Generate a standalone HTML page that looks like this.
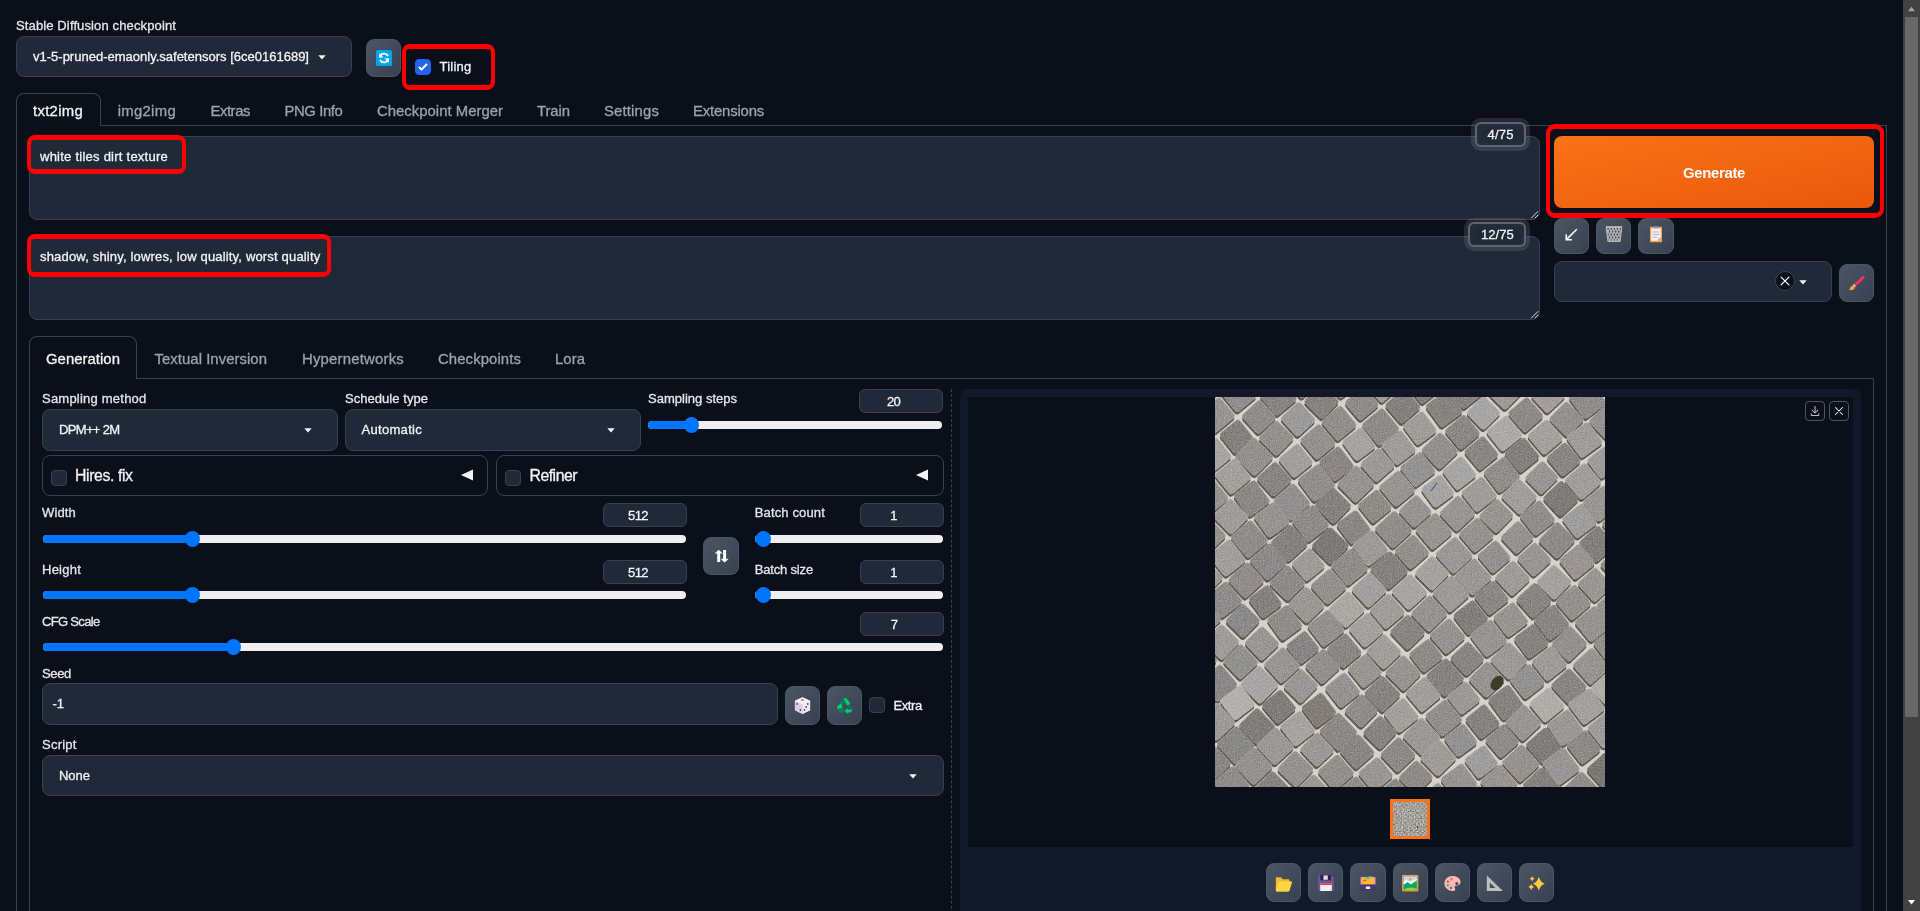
<!DOCTYPE html>
<html lang="en"><head><meta charset="utf-8"><title>Stable Diffusion</title>
<style>
html,body{margin:0;padding:0;}
body{width:1920px;height:911px;overflow:hidden;background:#0b0f19;font-family:"Liberation Sans",sans-serif;position:relative;}
.a{position:absolute;box-sizing:border-box;}
.t{position:absolute;white-space:nowrap;font-family:"Liberation Sans",sans-serif;-webkit-text-stroke:0.3px currentColor;}
svg{position:absolute;overflow:visible;}
#app{position:absolute;left:0;top:0;width:1920px;height:911px;overflow:hidden;will-change:transform;}
.ns{-webkit-text-stroke:0 !important;}

</style></head>
<body>
<div id="app">
<div class="a" style="left:16px;top:36px;width:336px;height:41px;background:#1f2937;border:1px solid #374151;border-radius:8px;"></div>
<svg style="left:317.5px;top:54.5px" width="8" height="5" viewBox="0 0 8 5"><path d="M0.3 0.3h7.4L4 4.6z" fill="#f3f4f6"/></svg>
<div class="a" style="left:366px;top:39px;width:35px;height:38px;background:linear-gradient(to bottom right,#4b5563,#374151);border:1px solid #4b5563;border-radius:8px;"></div>
<svg style="left:375.5px;top:50.2px" width="16" height="16" viewBox="0 0 16 16"><rect width="16" height="16" rx="1.6" fill="#00a6ed"/><path d="M3.6 7.4A4.5 4.5 0 0 1 12 6.0" stroke="#fff" stroke-width="1.7" fill="none"/><path d="M3.2 3.2v4.4h4.4z" fill="#fff"/><path d="M12.4 8.6A4.5 4.5 0 0 1 4 10.0" stroke="#fff" stroke-width="1.7" fill="none"/><path d="M12.8 12.8V8.4H8.4z" fill="#fff"/></svg>
<div class="a" style="left:402px;top:44px;width:93px;height:46px;border:4px solid #ff0000;border-radius:8px;border-width:5px 4px;"></div>
<div class="a" style="left:415px;top:59px;width:16px;height:16px;background:#2563eb;border:1px solid #2563eb;border-radius:4px;"></div>
<svg style="left:415px;top:59px" width="16" height="16" viewBox="0 0 16 16"><path d="M12.207 4.793a1 1 0 010 1.414l-5 5a1 1 0 01-1.414 0l-2-2a1 1 0 011.414-1.414L6.5 9.086l4.293-4.293a1 1 0 011.414 0z" fill="#fff"/></svg>
<div class="a" style="left:16px;top:125px;width:1871px;height:900px;border:1px solid #374151;"></div>
<div class="a" style="left:16px;top:93px;width:85px;height:33px;background:#0b0f19;border:1px solid #374151;border-bottom:none;border-radius:8px 8px 0 0;"></div>
<div class="a" style="left:29px;top:136px;width:1511px;height:84px;background:#1f2937;border:1px solid #374151;border-radius:8px;"></div>
<svg style="left:1530px;top:210px" width="9" height="9" viewBox="0 0 9 9"><path d="M1.2 8.2L8.2 1.2M4.8 8.2L8.2 4.8" stroke="#e5e7eb" stroke-width="0.9" fill="none"/></svg>
<div class="a" style="left:29px;top:236px;width:1511px;height:84px;background:#1f2937;border:1px solid #374151;border-radius:8px;"></div>
<svg style="left:1530px;top:310px" width="9" height="9" viewBox="0 0 9 9"><path d="M1.2 8.2L8.2 1.2M4.8 8.2L8.2 4.8" stroke="#e5e7eb" stroke-width="0.9" fill="none"/></svg>
<div class="a" style="left:27px;top:135px;width:159px;height:39px;border:4px solid #ff0000;border-radius:8px;border-width:5px 4px;"></div>
<div class="a" style="left:27px;top:234px;width:304px;height:43px;border:4px solid #ff0000;border-radius:8px;border-width:5px 4px;"></div>
<div class="a" style="left:1475px;top:122px;width:51px;height:25px;background:#1f2937;border:2px solid rgba(192,192,192,0.4);border-radius:6px;box-shadow:0 0 0 4px rgba(192,192,192,0.15), inset 0 0 8px rgba(192,192,192,0.075);"></div>
<div class="a" style="left:1468px;top:222px;width:58px;height:25px;background:#1f2937;border:2px solid rgba(192,192,192,0.4);border-radius:6px;box-shadow:0 0 0 4px rgba(192,192,192,0.15), inset 0 0 8px rgba(192,192,192,0.075);"></div>
<div class="a" style="left:1546px;top:124px;width:338px;height:94px;border:4px solid #ff0000;border-radius:9px;border-width:5px 4px;"></div>
<div class="a" style="left:1554px;top:136px;width:320px;height:72px;background:linear-gradient(to bottom right,#f97316,#ea580c);border-radius:8px;"></div>
<div class="a" style="left:1554px;top:218px;width:35px;height:36px;background:linear-gradient(to bottom right,#4b5563,#374151);border:1px solid #4b5563;border-radius:8px;"></div>
<div class="a" style="left:1596px;top:218px;width:35px;height:36px;background:linear-gradient(to bottom right,#4b5563,#374151);border:1px solid #4b5563;border-radius:8px;"></div>
<div class="a" style="left:1638px;top:218px;width:36px;height:36px;background:linear-gradient(to bottom right,#4b5563,#374151);border:1px solid #4b5563;border-radius:8px;"></div>
<svg style="left:1554px;top:218px" width="35" height="36" viewBox="0 0 35 36"><path d="M22.8 11.2L12.6 21.4" stroke="#fff" stroke-width="1.5" fill="none"/><path d="M12.2 16.2v5.6h5.600" stroke="#fff" stroke-width="1.5" fill="none" stroke-linejoin="miter"/></svg><svg style="left:1596px;top:218px" width="35" height="36" viewBox="0 0 35 36"><defs><clipPath id="tcp"><path d="M10.300 9.600h15.400l-1.600 13.400H11.900z"/></clipPath></defs><g clip-path="url(#tcp)" stroke="#b9b9b9" stroke-width="1.150" fill="none"><path d="M-0.2 8l9 17M-0.2 25l9-17"/><path d="M2.9 8l9 17M2.9 25l9-17"/><path d="M6.0 8l9 17M6.0 25l9-17"/><path d="M9.1 8l9 17M9.1 25l9-17"/><path d="M12.2 8l9 17M12.2 25l9-17"/><path d="M15.3 8l9 17M15.3 25l9-17"/><path d="M18.4 8l9 17M18.4 25l9-17"/><path d="M21.5 8l9 17M21.5 25l9-17"/><path d="M24.6 8l9 17M24.6 25l9-17"/></g><path d="M9.900 8.200h16.200v1.700H9.900z" fill="#c3c3c3"/><path d="M10.300 9.600l1.600 13.400" stroke="#b9b9b9" stroke-width="1.100"/><path d="M25.700 9.600l-1.600 13.400" stroke="#b9b9b9" stroke-width="1.100"/><path d="M11.500 22.400h13l-.200 1.700H11.700z" fill="#b4b4b4"/></svg><svg style="left:1638px;top:218px" width="36" height="36" viewBox="0 0 36 36"><rect x="12" y="8.8" width="12" height="15.4" rx="0.8" fill="#f4a340"/><path d="M13.2 10.2h9.6v9.6l-3 3h-6.6z" fill="#f3eef8"/><path d="M22.8 19.8l-3 3v-3z" fill="#cdc4d6"/><rect x="15.2" y="8.4" width="5.6" height="2.2" rx="0.6" fill="#9b9b9b"/><rect x="17.3" y="7.8" width="1.4" height="1.2" fill="#7d7d86"/><path d="M14.6 14h6.8M14.6 16.6h6.8M14.6 19.2h4.4" stroke="#b9b6c0" stroke-width="1"/></svg>
<div class="a" style="left:1554px;top:261px;width:278px;height:41px;background:#1f2937;border:1px solid #374151;border-radius:8px;"></div>
<svg style="left:1775px;top:271px" width="20" height="20" viewBox="0 0 20 20"><circle cx="10" cy="10" r="9.500" fill="#0b0f19" stroke="#374151" stroke-width="1"/><path d="M6.100 6.100l7.800 7.800M13.900 6.100l-7.800 7.800" stroke="#fff" stroke-width="1.200" stroke-linecap="round"/></svg>
<svg style="left:1799px;top:279.5px" width="8" height="5" viewBox="0 0 8 5"><path d="M0.3 0.3h7.4L4 4.6z" fill="#f3f4f6"/></svg>
<div class="a" style="left:1839px;top:264px;width:35px;height:38px;background:linear-gradient(to bottom right,#4b5563,#374151);border:1px solid #4b5563;border-radius:8px;"></div>
<svg style="left:1839px;top:264px" width="35" height="38" viewBox="0 0 35 38"><path d="M24.3 13.2L15.6 21.4" stroke="#f92f60" stroke-width="2.8" stroke-linecap="round"/><path d="M15.9 21.1L14.7 22.2" stroke="#d3d3d3" stroke-width="3.0"/><path d="M14.3 22.0c1.2 0.6 1.6 2.0 0.7 3.0c-1.2 1.4-3.4 1.2-5.2 0.9c0.9-0.4 1.2-1.0 1.4-1.9c0.3-1.5 1.8-2.6 3.1-2z" fill="#fcab18"/></svg>
<div class="a" style="left:29px;top:378px;width:1845px;height:700px;border:1px solid #374151;"></div>
<div class="a" style="left:29px;top:336px;width:108px;height:43px;background:#0b0f19;border:1px solid #374151;border-bottom:none;border-radius:8px 8px 0 0;"></div>
<div class="a" style="left:42px;top:409px;width:296px;height:42px;background:#1f2937;border:1px solid #374151;border-radius:8px;"></div>
<svg style="left:303.5px;top:428.0px" width="8" height="5" viewBox="0 0 8 5"><path d="M0.3 0.3h7.4L4 4.6z" fill="#f3f4f6"/></svg>
<div class="a" style="left:345px;top:409px;width:296px;height:42px;background:#1f2937;border:1px solid #374151;border-radius:8px;"></div>
<svg style="left:606.5px;top:428.0px" width="8" height="5" viewBox="0 0 8 5"><path d="M0.3 0.3h7.4L4 4.6z" fill="#f3f4f6"/></svg>
<div class="a" style="left:859px;top:389px;width:84px;height:24px;background:#1f2937;border:1px solid #374151;border-radius:6px;"></div>
<div class="a" style="left:648px;top:421px;width:294px;height:8px;background:#efefef;border-radius:4px;"></div>
<div class="a" style="left:648px;top:421px;width:43px;height:8px;background:#0075ff;border-radius:4px;"></div>
<div class="a" style="left:683.5px;top:417px;width:15px;height:16px;background:#0075ff;border-radius:50%;"></div>
<div class="a" style="left:42px;top:455px;width:446px;height:41px;border:1px solid #374151;border-radius:8px;"></div>
<div class="a" style="left:51px;top:470px;width:16px;height:16px;background:#1f2937;border:1px solid #374151;border-radius:4px;"></div>
<svg style="left:461px;top:469px" width="12" height="12" viewBox="0 0 12 12"><path d="M12 0.5v11L0 6z" fill="#f3f4f6"/></svg>
<div class="a" style="left:496px;top:455px;width:448px;height:41px;border:1px solid #374151;border-radius:8px;"></div>
<div class="a" style="left:505px;top:470px;width:16px;height:16px;background:#1f2937;border:1px solid #374151;border-radius:4px;"></div>
<svg style="left:916px;top:469px" width="12" height="12" viewBox="0 0 12 12"><path d="M12 0.5v11L0 6z" fill="#f3f4f6"/></svg>
<div class="a" style="left:603px;top:503px;width:84px;height:24px;background:#1f2937;border:1px solid #374151;border-radius:6px;"></div>
<div class="a" style="left:43px;top:535px;width:643px;height:8px;background:#efefef;border-radius:4px;"></div>
<div class="a" style="left:43px;top:535px;width:149px;height:8px;background:#0075ff;border-radius:4px;"></div>
<div class="a" style="left:184.5px;top:531px;width:15px;height:16px;background:#0075ff;border-radius:50%;"></div>
<div class="a" style="left:603px;top:560px;width:84px;height:24px;background:#1f2937;border:1px solid #374151;border-radius:6px;"></div>
<div class="a" style="left:43px;top:591px;width:643px;height:8px;background:#efefef;border-radius:4px;"></div>
<div class="a" style="left:43px;top:591px;width:149px;height:8px;background:#0075ff;border-radius:4px;"></div>
<div class="a" style="left:184.5px;top:587px;width:15px;height:16px;background:#0075ff;border-radius:50%;"></div>
<div class="a" style="left:703px;top:537px;width:36px;height:38px;background:linear-gradient(to bottom right,#4b5563,#374151);border:1px solid #4b5563;border-radius:8px;"></div>
<svg style="left:703px;top:537px" width="36" height="38" viewBox="0 0 36 38"><path d="M15.7 25V14.2" stroke="#fff" stroke-width="3" fill="none"/><path d="M11.6 16.4l4.1-3.6 4.1 3.6z" fill="#fff"/><path d="M21.6 13v10.6" stroke="#fff" stroke-width="3" fill="none"/><path d="M17.5 21.8l4.1 3.6 4.1-3.6z" fill="#fff"/></svg>
<div class="a" style="left:860px;top:503px;width:84px;height:24px;background:#1f2937;border:1px solid #374151;border-radius:6px;"></div>
<div class="a" style="left:755px;top:535px;width:188px;height:8px;background:#efefef;border-radius:4px;"></div>
<div class="a" style="left:755px;top:535px;width:8px;height:8px;background:#0075ff;border-radius:4px;"></div>
<div class="a" style="left:755.5px;top:531px;width:15px;height:16px;background:#0075ff;border-radius:50%;"></div>
<div class="a" style="left:860px;top:560px;width:84px;height:24px;background:#1f2937;border:1px solid #374151;border-radius:6px;"></div>
<div class="a" style="left:755px;top:591px;width:188px;height:8px;background:#efefef;border-radius:4px;"></div>
<div class="a" style="left:755px;top:591px;width:8px;height:8px;background:#0075ff;border-radius:4px;"></div>
<div class="a" style="left:755.5px;top:587px;width:15px;height:16px;background:#0075ff;border-radius:50%;"></div>
<div class="a" style="left:860px;top:612px;width:84px;height:24px;background:#1f2937;border:1px solid #374151;border-radius:6px;"></div>
<div class="a" style="left:43px;top:643px;width:900px;height:8px;background:#efefef;border-radius:4px;"></div>
<div class="a" style="left:43px;top:643px;width:190px;height:8px;background:#0075ff;border-radius:4px;"></div>
<div class="a" style="left:225.5px;top:639px;width:15px;height:16px;background:#0075ff;border-radius:50%;"></div>
<div class="a" style="left:42px;top:683px;width:736px;height:42px;background:#1f2937;border:1px solid #374151;border-radius:8px;"></div>
<div class="a" style="left:785px;top:686px;width:35px;height:39px;background:linear-gradient(to bottom right,#4b5563,#374151);border:1px solid #4b5563;border-radius:8px;"></div>
<div class="a" style="left:827px;top:686px;width:35px;height:39px;background:linear-gradient(to bottom right,#4b5563,#374151);border:1px solid #4b5563;border-radius:8px;"></div>
<svg style="left:785px;top:686px" width="35" height="39" viewBox="0 0 35 39"><path d="M17.5 11.2l7.6 3.6v9.4l-7.6 3.7-7.6-3.7v-9.4z" fill="#e1d8ec"/><path d="M17.5 11.2l7.6 3.6-7.6 3.8-7.6-3.8z" fill="#f6f1fa"/><path d="M17.5 18.6l7.6-3.8v9.4l-7.6 3.7z" fill="#efe8f5"/><path d="M17.5 18.6l-7.6-3.8v9.4l7.6 3.7z" fill="#d9cfe4"/><ellipse cx="17.5" cy="14" rx="1.6" ry="1" fill="#f8706a"/><ellipse cx="12.1" cy="18" rx="0.8" ry="1" fill="#433b6b"/><ellipse cx="15.4" cy="24" rx="0.8" ry="1" fill="#433b6b"/><ellipse cx="22.8" cy="18" rx="0.8" ry="1" fill="#433b6b"/><ellipse cx="21.2" cy="21" rx="0.8" ry="1" fill="#433b6b"/><ellipse cx="19.5" cy="24" rx="0.8" ry="1" fill="#433b6b"/></svg><svg style="left:827px;top:686px" width="35" height="39" viewBox="0 0 35 39"><path d="M16.3 12.2h3.4l3.6 5.8-3.2 1.6-2.3-4z" fill="#00d26a"/><path d="M16.3 12.2l1.5 3.4-2.2 3.6-2.8-1.7z" fill="#008463"/><path d="M13.4 18.2l1.2 4-3 .2 1.6 4.2-2.6-4.2c-.5-.9-.4-1.6 0-2.4z" fill="#00d26a"/><path d="M10.6 20l3.4-2.6 1.6 4.2-2.2 1.2z" fill="#00d26a"/><path d="M12.4 23h5v3.6h-3.6c-1 0-1.5-.4-2-1.2z" fill="#008463"/><path d="M22.6 18.4l2.6 4.4c.4.8.3 1.500-.2 2.2l-2-3.400-2.800-1.600z" fill="#008463"/><path d="M25.400 23.400l-1.600 3.200h-3.200v1.400l-3-2.900 3-3v1.300z" fill="#00d26a"/></svg>
<div class="a" style="left:869px;top:697px;width:16px;height:16px;background:#1f2937;border:1px solid #374151;border-radius:4px;"></div>
<div class="a" style="left:42px;top:755px;width:902px;height:41px;background:#1f2937;border:1px solid #374151;border-radius:8px;"></div>
<svg style="left:908.5px;top:773.5px" width="8" height="5" viewBox="0 0 8 5"><path d="M0.3 0.3h7.4L4 4.6z" fill="#f3f4f6"/></svg>
<div class="a" style="left:951px;top:389px;width:1px;height:600px;border-left:1px dashed #374151;"></div>
<div class="a" style="left:960px;top:389px;width:901px;height:600px;background:#111827;border-radius:8px;"></div>
<div class="a" style="left:968px;top:397px;width:885px;height:450px;background:#0b0f19;"></div>
<svg style="left:1215px;top:397px" width="390" height="390" viewBox="0 0 390 390"><defs><clipPath id="cpim"><rect width="390" height="390"/></clipPath><filter id="blim" x="-5%" y="-5%" width="110%" height="110%"><feGaussianBlur stdDeviation="0.55"/></filter><filter id="grim" x="0" y="0" width="100%" height="100%" color-interpolation-filters="sRGB"><feTurbulence type="fractalNoise" baseFrequency="0.85" numOctaves="3" seed="3" result="n"/><feColorMatrix in="n" type="matrix" values="1.2 1.2 0 0 -0.7  1.2 1.2 0 0 -0.7  1.2 1.2 0 0 -0.7  0 0 0 0 1"/></filter></defs><g clip-path="url(#cpim)"><rect width="390" height="390" fill="#d6d3ce"/><g filter="url(#blim)"><rect x="-12.3" y="-12.3" width="24.5" height="24.6" rx="3.2" transform="translate(-23.9 388.5) rotate(-40.9)" fill="#625a4f"/><rect x="-12.5" y="-12.9" width="25.0" height="25.8" rx="3.2" transform="translate(-5.7 409.2) rotate(-36.1)" fill="#625a4f"/><rect x="-12.5" y="-12.2" width="25.0" height="24.4" rx="3.2" transform="translate(-20.9 347.1) rotate(-36.2)" fill="#625a4f"/><rect x="-12.3" y="-12.0" width="24.6" height="24.0" rx="3.2" transform="translate(-0.9 369.2) rotate(-41.7)" fill="#625a4f"/><rect x="-13.2" y="-13.3" width="26.4" height="26.6" rx="3.2" transform="translate(16.2 390.0) rotate(-39.7)" fill="#625a4f"/><rect x="-12.7" y="-13.0" width="25.4" height="26.0" rx="3.2" transform="translate(35.4 413.1) rotate(-37.6)" fill="#625a4f"/><rect x="-13.3" y="-13.1" width="26.7" height="26.2" rx="3.2" transform="translate(-18.8 305.6) rotate(-40.5)" fill="#625a4f"/><rect x="-13.5" y="-14.0" width="27.1" height="28.1" rx="3.2" transform="translate(1.1 327.6) rotate(-42.6)" fill="#625a4f"/><rect x="-13.6" y="-14.0" width="27.2" height="28.0" rx="3.2" transform="translate(20.4 350.9) rotate(-42.2)" fill="#625a4f"/><rect x="-13.7" y="-13.9" width="27.4" height="27.7" rx="3.2" transform="translate(38.6 372.0) rotate(-43.6)" fill="#625a4f"/><rect x="-13.1" y="-12.7" width="26.2" height="25.4" rx="3.2" transform="translate(56.6 394.7) rotate(-44.4)" fill="#625a4f"/><rect x="-13.0" y="-13.1" width="25.9" height="26.3" rx="3.2" transform="translate(75.8 415.6) rotate(-36.1)" fill="#625a4f"/><rect x="-13.6" y="-13.4" width="27.2" height="26.9" rx="3.2" transform="translate(-16.9 265.6) rotate(-41.4)" fill="#625a4f"/><rect x="-13.6" y="-13.6" width="27.1" height="27.2" rx="3.2" transform="translate(3.4 288.9) rotate(-40.4)" fill="#625a4f"/><rect x="-13.1" y="-12.6" width="26.2" height="25.3" rx="3.2" transform="translate(22.1 308.6) rotate(-37.8)" fill="#625a4f"/><rect x="-13.1" y="-13.5" width="26.1" height="26.9" rx="3.2" transform="translate(41.7 332.2) rotate(-44.1)" fill="#625a4f"/><rect x="-13.6" y="-13.8" width="27.2" height="27.6" rx="3.2" transform="translate(59.8 352.1) rotate(-42.9)" fill="#625a4f"/><rect x="-13.1" y="-13.5" width="26.2" height="26.9" rx="3.2" transform="translate(80.2 375.0) rotate(-45.8)" fill="#625a4f"/><rect x="-12.5" y="-12.5" width="24.9" height="25.0" rx="3.2" transform="translate(97.8 397.2) rotate(-43.4)" fill="#625a4f"/><rect x="-13.2" y="-12.9" width="26.4" height="25.9" rx="3.2" transform="translate(-11.9 224.0) rotate(-39.6)" fill="#625a4f"/><rect x="-13.0" y="-13.0" width="26.0" height="26.1" rx="3.2" transform="translate(6.2 248.0) rotate(-45.5)" fill="#625a4f"/><rect x="-12.6" y="-12.9" width="25.3" height="25.9" rx="3.2" transform="translate(25.1 267.7) rotate(-43.5)" fill="#625a4f"/><rect x="-13.5" y="-14.1" width="27.1" height="28.3" rx="3.2" transform="translate(43.9 290.6) rotate(-45.7)" fill="#625a4f"/><rect x="-12.5" y="-12.5" width="24.9" height="25.1" rx="3.2" transform="translate(63.6 312.6) rotate(-39.6)" fill="#625a4f"/><rect x="-13.0" y="-13.0" width="26.0" height="26.0" rx="3.2" transform="translate(82.3 334.5) rotate(-37.5)" fill="#625a4f"/><rect x="-12.4" y="-12.6" width="24.9" height="25.2" rx="3.2" transform="translate(101.7 355.6) rotate(-43.6)" fill="#625a4f"/><rect x="-13.4" y="-13.1" width="26.8" height="26.1" rx="3.2" transform="translate(120.7 378.4) rotate(-41.1)" fill="#625a4f"/><rect x="-13.3" y="-13.4" width="26.5" height="26.7" rx="3.2" transform="translate(139.0 400.2) rotate(-37.3)" fill="#625a4f"/><rect x="-13.3" y="-13.8" width="26.6" height="27.5" rx="3.2" transform="translate(-10.8 183.2) rotate(-45.8)" fill="#625a4f"/><rect x="-13.5" y="-13.3" width="27.0" height="26.6" rx="3.2" transform="translate(8.5 205.6) rotate(-38.3)" fill="#625a4f"/><rect x="-12.4" y="-12.5" width="24.9" height="25.1" rx="3.2" transform="translate(27.4 226.5) rotate(-45.7)" fill="#625a4f"/><rect x="-12.4" y="-12.7" width="24.8" height="25.3" rx="3.2" transform="translate(46.6 249.4) rotate(-43.4)" fill="#625a4f"/><rect x="-13.3" y="-13.2" width="26.5" height="26.3" rx="3.2" transform="translate(66.9 271.1) rotate(-42.1)" fill="#625a4f"/><rect x="-12.7" y="-12.4" width="25.4" height="24.8" rx="3.2" transform="translate(85.4 291.9) rotate(-45.6)" fill="#625a4f"/><rect x="-12.6" y="-12.9" width="25.3" height="25.7" rx="3.2" transform="translate(103.5 316.0) rotate(-36.8)" fill="#625a4f"/><rect x="-13.6" y="-14.1" width="27.3" height="28.1" rx="3.2" transform="translate(123.0 337.7) rotate(-43.7)" fill="#625a4f"/><rect x="-12.8" y="-12.6" width="25.6" height="25.1" rx="3.2" transform="translate(141.8 357.7) rotate(-41.0)" fill="#625a4f"/><rect x="-12.9" y="-12.5" width="25.8" height="25.0" rx="3.2" transform="translate(160.3 380.3) rotate(-39.3)" fill="#625a4f"/><rect x="-13.1" y="-13.3" width="26.1" height="26.6" rx="3.2" transform="translate(179.1 402.1) rotate(-40.5)" fill="#625a4f"/><rect x="-12.8" y="-13.0" width="25.6" height="26.1" rx="3.2" transform="translate(-7.1 141.2) rotate(-43.5)" fill="#625a4f"/><rect x="-13.3" y="-13.8" width="26.7" height="27.5" rx="3.2" transform="translate(12.1 163.9) rotate(-37.7)" fill="#625a4f"/><rect x="-13.4" y="-13.0" width="26.8" height="25.9" rx="3.2" transform="translate(30.9 186.2) rotate(-42.2)" fill="#625a4f"/><rect x="-12.2" y="-12.3" width="24.4" height="24.6" rx="3.2" transform="translate(49.9 207.5) rotate(-36.6)" fill="#625a4f"/><rect x="-12.8" y="-13.3" width="25.6" height="26.6" rx="3.2" transform="translate(69.3 228.7) rotate(-36.1)" fill="#625a4f"/><rect x="-12.3" y="-12.0" width="24.5" height="24.0" rx="3.2" transform="translate(87.5 253.3) rotate(-38.7)" fill="#625a4f"/><rect x="-12.9" y="-12.8" width="25.8" height="25.5" rx="3.2" transform="translate(107.4 272.4) rotate(-42.9)" fill="#625a4f"/><rect x="-12.8" y="-12.9" width="25.6" height="25.9" rx="3.2" transform="translate(127.2 296.0) rotate(-38.3)" fill="#625a4f"/><rect x="-12.4" y="-12.0" width="24.8" height="24.1" rx="3.2" transform="translate(145.9 316.7) rotate(-44.9)" fill="#625a4f"/><rect x="-12.4" y="-12.2" width="24.8" height="24.3" rx="3.2" transform="translate(164.6 338.4) rotate(-45.8)" fill="#625a4f"/><rect x="-12.9" y="-12.8" width="25.8" height="25.5" rx="3.2" transform="translate(182.7 360.7) rotate(-43.4)" fill="#625a4f"/><rect x="-12.7" y="-12.2" width="25.3" height="24.3" rx="3.2" transform="translate(200.6 383.3) rotate(-44.2)" fill="#625a4f"/><rect x="-12.8" y="-13.2" width="25.6" height="26.4" rx="3.2" transform="translate(222.0 406.3) rotate(-42.0)" fill="#625a4f"/><rect x="-13.3" y="-12.9" width="26.7" height="25.7" rx="3.2" transform="translate(-23.2 81.1) rotate(-36.1)" fill="#625a4f"/><rect x="-12.5" y="-12.2" width="24.9" height="24.4" rx="3.2" transform="translate(-3.6 102.8) rotate(-39.2)" fill="#625a4f"/><rect x="-12.7" y="-13.3" width="25.5" height="26.6" rx="3.2" transform="translate(15.4 122.5) rotate(-44.5)" fill="#625a4f"/><rect x="-13.5" y="-14.0" width="27.1" height="27.9" rx="3.2" transform="translate(33.9 145.1) rotate(-39.7)" fill="#625a4f"/><rect x="-13.5" y="-13.7" width="26.9" height="27.4" rx="3.2" transform="translate(53.0 167.6) rotate(-41.5)" fill="#625a4f"/><rect x="-13.1" y="-13.1" width="26.1" height="26.2" rx="3.2" transform="translate(72.1 188.9) rotate(-45.7)" fill="#625a4f"/><rect x="-13.1" y="-13.6" width="26.2" height="27.2" rx="3.2" transform="translate(91.0 210.9) rotate(-44.5)" fill="#625a4f"/><rect x="-13.7" y="-13.6" width="27.4" height="27.1" rx="3.2" transform="translate(110.7 234.1) rotate(-37.3)" fill="#625a4f"/><rect x="-12.6" y="-13.0" width="25.1" height="25.9" rx="3.2" transform="translate(129.0 256.6) rotate(-39.5)" fill="#625a4f"/><rect x="-12.3" y="-12.7" width="24.6" height="25.5" rx="3.2" transform="translate(149.4 276.8) rotate(-38.9)" fill="#625a4f"/><rect x="-13.0" y="-13.4" width="26.0" height="26.9" rx="3.2" transform="translate(167.0 299.8) rotate(-44.0)" fill="#625a4f"/><rect x="-12.9" y="-12.6" width="25.9" height="25.3" rx="3.2" transform="translate(185.8 321.3) rotate(-38.0)" fill="#625a4f"/><rect x="-13.6" y="-13.9" width="27.1" height="27.8" rx="3.2" transform="translate(206.2 342.4) rotate(-44.5)" fill="#625a4f"/><rect x="-13.5" y="-13.0" width="26.9" height="26.0" rx="3.2" transform="translate(223.1 363.9) rotate(-44.2)" fill="#625a4f"/><rect x="-13.6" y="-13.0" width="27.1" height="26.1" rx="3.2" transform="translate(243.5 387.2) rotate(-36.1)" fill="#625a4f"/><rect x="-13.2" y="-13.1" width="26.4" height="26.2" rx="3.2" transform="translate(261.8 408.9) rotate(-45.8)" fill="#625a4f"/><rect x="-12.7" y="-13.1" width="25.4" height="26.2" rx="3.2" transform="translate(-20.1 37.8) rotate(-37.5)" fill="#625a4f"/><rect x="-12.7" y="-12.6" width="25.5" height="25.2" rx="3.2" transform="translate(-1.1 60.8) rotate(-38.8)" fill="#625a4f"/><rect x="-13.6" y="-13.1" width="27.2" height="26.1" rx="3.2" transform="translate(17.7 82.2) rotate(-39.7)" fill="#625a4f"/><rect x="-13.1" y="-13.7" width="26.2" height="27.3" rx="3.2" transform="translate(36.4 104.4) rotate(-36.2)" fill="#625a4f"/><rect x="-13.2" y="-13.4" width="26.3" height="26.8" rx="3.2" transform="translate(56.5 125.5) rotate(-36.0)" fill="#625a4f"/><rect x="-13.7" y="-13.3" width="27.4" height="26.7" rx="3.2" transform="translate(73.8 149.1) rotate(-42.3)" fill="#625a4f"/><rect x="-12.3" y="-11.9" width="24.7" height="23.9" rx="3.2" transform="translate(92.9 170.7) rotate(-39.5)" fill="#625a4f"/><rect x="-13.4" y="-12.9" width="26.7" height="25.8" rx="3.2" transform="translate(113.4 192.4) rotate(-41.3)" fill="#625a4f"/><rect x="-13.5" y="-13.0" width="27.1" height="25.9" rx="3.2" transform="translate(131.5 215.6) rotate(-42.5)" fill="#625a4f"/><rect x="-13.0" y="-12.5" width="25.9" height="25.0" rx="3.2" transform="translate(151.0 236.0) rotate(-40.3)" fill="#625a4f"/><rect x="-12.6" y="-13.0" width="25.3" height="25.9" rx="3.2" transform="translate(168.4 257.7) rotate(-43.5)" fill="#625a4f"/><rect x="-12.9" y="-13.3" width="25.8" height="26.6" rx="3.2" transform="translate(187.9 279.0) rotate(-45.0)" fill="#625a4f"/><rect x="-13.0" y="-12.9" width="26.0" height="25.8" rx="3.2" transform="translate(208.0 300.3) rotate(-39.9)" fill="#625a4f"/><rect x="-13.4" y="-13.7" width="26.9" height="27.4" rx="3.2" transform="translate(228.4 323.8) rotate(-38.9)" fill="#625a4f"/><rect x="-12.4" y="-12.1" width="24.7" height="24.3" rx="3.2" transform="translate(245.3 346.0) rotate(-36.3)" fill="#625a4f"/><rect x="-12.6" y="-12.1" width="25.2" height="24.3" rx="3.2" transform="translate(265.9 367.7) rotate(-36.8)" fill="#625a4f"/><rect x="-13.5" y="-14.1" width="27.1" height="28.1" rx="3.2" transform="translate(283.7 389.4) rotate(-40.3)" fill="#625a4f"/><rect x="-12.6" y="-12.4" width="25.2" height="24.9" rx="3.2" transform="translate(303.7 411.8) rotate(-41.7)" fill="#625a4f"/><rect x="-13.7" y="-14.1" width="27.4" height="28.1" rx="3.2" transform="translate(-17.7 -1.2) rotate(-42.7)" fill="#625a4f"/><rect x="-13.3" y="-12.8" width="26.7" height="25.6" rx="3.2" transform="translate(1.7 20.9) rotate(-39.8)" fill="#625a4f"/><rect x="-12.2" y="-12.8" width="24.5" height="25.5" rx="3.2" transform="translate(21.3 42.6) rotate(-38.5)" fill="#625a4f"/><rect x="-13.7" y="-14.2" width="27.4" height="28.4" rx="3.2" transform="translate(38.8 62.6) rotate(-45.3)" fill="#625a4f"/><rect x="-12.8" y="-12.7" width="25.5" height="25.4" rx="3.2" transform="translate(59.0 85.0) rotate(-41.6)" fill="#625a4f"/><rect x="-13.5" y="-13.7" width="26.9" height="27.3" rx="3.2" transform="translate(76.5 107.8) rotate(-40.5)" fill="#625a4f"/><rect x="-13.6" y="-13.7" width="27.3" height="27.4" rx="3.2" transform="translate(95.2 129.3) rotate(-36.8)" fill="#625a4f"/><rect x="-13.5" y="-13.5" width="27.0" height="27.0" rx="3.2" transform="translate(114.9 151.6) rotate(-45.7)" fill="#625a4f"/><rect x="-13.6" y="-13.6" width="27.2" height="27.2" rx="3.2" transform="translate(134.3 173.0) rotate(-39.1)" fill="#625a4f"/><rect x="-13.1" y="-12.7" width="26.2" height="25.4" rx="3.2" transform="translate(153.9 195.8) rotate(-42.5)" fill="#625a4f"/><rect x="-13.0" y="-12.8" width="26.0" height="25.7" rx="3.2" transform="translate(171.8 217.2) rotate(-40.3)" fill="#625a4f"/><rect x="-12.7" y="-12.9" width="25.4" height="25.9" rx="3.2" transform="translate(192.2 238.0) rotate(-43.7)" fill="#625a4f"/><rect x="-12.6" y="-12.1" width="25.2" height="24.1" rx="3.2" transform="translate(210.7 261.6) rotate(-37.8)" fill="#625a4f"/><rect x="-13.7" y="-14.2" width="27.3" height="28.3" rx="3.2" transform="translate(229.9 283.2) rotate(-41.4)" fill="#625a4f"/><rect x="-12.4" y="-12.1" width="24.7" height="24.2" rx="3.2" transform="translate(248.3 304.0) rotate(-37.5)" fill="#625a4f"/><rect x="-12.4" y="-13.0" width="24.9" height="25.9" rx="3.2" transform="translate(267.3 327.5) rotate(-38.4)" fill="#625a4f"/><rect x="-12.5" y="-12.2" width="25.1" height="24.3" rx="3.2" transform="translate(286.8 346.9) rotate(-40.7)" fill="#625a4f"/><rect x="-13.6" y="-13.8" width="27.2" height="27.6" rx="3.2" transform="translate(305.5 369.2) rotate(-42.4)" fill="#625a4f"/><rect x="-13.5" y="-13.8" width="27.0" height="27.5" rx="3.2" transform="translate(326.2 391.7) rotate(-43.4)" fill="#625a4f"/><rect x="-12.6" y="-12.1" width="25.2" height="24.3" rx="3.2" transform="translate(342.6 413.4) rotate(-41.2)" fill="#625a4f"/><rect x="-13.1" y="-13.6" width="26.1" height="27.3" rx="3.2" transform="translate(23.0 -0.2) rotate(-39.1)" fill="#625a4f"/><rect x="-12.5" y="-12.5" width="25.0" height="25.0" rx="3.2" transform="translate(43.6 22.8) rotate(-42.5)" fill="#625a4f"/><rect x="-12.8" y="-12.8" width="25.7" height="25.6" rx="3.2" transform="translate(60.9 44.1) rotate(-45.2)" fill="#625a4f"/><rect x="-12.7" y="-12.5" width="25.3" height="24.9" rx="3.2" transform="translate(80.5 66.7) rotate(-39.0)" fill="#625a4f"/><rect x="-13.6" y="-14.0" width="27.2" height="28.0" rx="3.2" transform="translate(101.1 88.7) rotate(-36.7)" fill="#625a4f"/><rect x="-13.1" y="-13.6" width="26.2" height="27.3" rx="3.2" transform="translate(117.5 111.2) rotate(-45.1)" fill="#625a4f"/><rect x="-12.4" y="-12.8" width="24.7" height="25.6" rx="3.2" transform="translate(138.3 133.1) rotate(-36.4)" fill="#625a4f"/><rect x="-13.1" y="-13.4" width="26.1" height="26.8" rx="3.2" transform="translate(154.8 154.0) rotate(-37.9)" fill="#625a4f"/><rect x="-13.7" y="-14.1" width="27.3" height="28.1" rx="3.2" transform="translate(173.9 176.0) rotate(-41.9)" fill="#625a4f"/><rect x="-13.1" y="-13.1" width="26.2" height="26.2" rx="3.2" transform="translate(194.0 197.9) rotate(-42.6)" fill="#625a4f"/><rect x="-13.5" y="-13.1" width="27.0" height="26.3" rx="3.2" transform="translate(213.9 219.4) rotate(-44.5)" fill="#625a4f"/><rect x="-13.2" y="-12.9" width="26.4" height="25.8" rx="3.2" transform="translate(232.1 242.1) rotate(-40.8)" fill="#625a4f"/><rect x="-12.5" y="-12.3" width="25.1" height="24.6" rx="3.2" transform="translate(251.8 264.7) rotate(-42.7)" fill="#625a4f"/><rect x="-13.3" y="-13.0" width="26.7" height="26.1" rx="3.2" transform="translate(271.4 285.4) rotate(-43.8)" fill="#625a4f"/><rect x="-12.7" y="-13.2" width="25.5" height="26.5" rx="3.2" transform="translate(290.4 308.4) rotate(-36.1)" fill="#625a4f"/><rect x="-13.4" y="-13.2" width="26.8" height="26.5" rx="3.2" transform="translate(307.9 328.7) rotate(-43.1)" fill="#625a4f"/><rect x="-13.4" y="-12.8" width="26.9" height="25.7" rx="3.2" transform="translate(328.4 351.4) rotate(-41.0)" fill="#625a4f"/><rect x="-13.5" y="-14.1" width="27.0" height="28.1" rx="3.2" transform="translate(345.8 372.3) rotate(-36.7)" fill="#625a4f"/><rect x="-13.3" y="-13.8" width="26.5" height="27.6" rx="3.2" transform="translate(366.3 396.0) rotate(-44.1)" fill="#625a4f"/><rect x="-12.9" y="-12.7" width="25.8" height="25.5" rx="3.2" transform="translate(384.4 417.7) rotate(-44.8)" fill="#625a4f"/><rect x="-12.4" y="-12.1" width="24.9" height="24.1" rx="3.2" transform="translate(45.4 -19.9) rotate(-38.6)" fill="#625a4f"/><rect x="-13.4" y="-13.4" width="26.8" height="26.8" rx="3.2" transform="translate(62.9 3.3) rotate(-39.5)" fill="#625a4f"/><rect x="-12.6" y="-12.7" width="25.2" height="25.5" rx="3.2" transform="translate(82.7 25.1) rotate(-42.3)" fill="#625a4f"/><rect x="-12.7" y="-13.2" width="25.5" height="26.4" rx="3.2" transform="translate(102.5 47.8) rotate(-40.2)" fill="#625a4f"/><rect x="-12.6" y="-13.1" width="25.1" height="26.1" rx="3.2" transform="translate(121.3 69.7) rotate(-37.5)" fill="#625a4f"/><rect x="-13.7" y="-13.4" width="27.4" height="26.8" rx="3.2" transform="translate(140.6 90.0) rotate(-44.3)" fill="#625a4f"/><rect x="-12.6" y="-12.1" width="25.3" height="24.3" rx="3.2" transform="translate(159.4 112.3) rotate(-39.1)" fill="#625a4f"/><rect x="-13.6" y="-13.6" width="27.2" height="27.2" rx="3.2" transform="translate(178.2 135.5) rotate(-42.2)" fill="#625a4f"/><rect x="-12.9" y="-12.4" width="25.8" height="24.8" rx="3.2" transform="translate(196.5 157.8) rotate(-41.0)" fill="#625a4f"/><rect x="-12.6" y="-12.6" width="25.2" height="25.1" rx="3.2" transform="translate(216.7 179.2) rotate(-45.2)" fill="#625a4f"/><rect x="-13.6" y="-13.6" width="27.1" height="27.1" rx="3.2" transform="translate(235.6 199.7) rotate(-41.7)" fill="#625a4f"/><rect x="-12.9" y="-12.7" width="25.8" height="25.3" rx="3.2" transform="translate(255.4 223.4) rotate(-37.6)" fill="#625a4f"/><rect x="-13.4" y="-14.0" width="26.8" height="28.0" rx="3.2" transform="translate(273.3 244.2) rotate(-36.8)" fill="#625a4f"/><rect x="-13.4" y="-13.8" width="26.8" height="27.6" rx="3.2" transform="translate(293.5 266.7) rotate(-44.2)" fill="#625a4f"/><rect x="-13.0" y="-12.8" width="25.9" height="25.6" rx="3.2" transform="translate(311.9 287.4) rotate(-38.1)" fill="#625a4f"/><rect x="-13.2" y="-12.6" width="26.3" height="25.3" rx="3.2" transform="translate(331.6 310.8) rotate(-39.3)" fill="#625a4f"/><rect x="-13.2" y="-13.6" width="26.5" height="27.1" rx="3.2" transform="translate(349.7 333.7) rotate(-36.1)" fill="#625a4f"/><rect x="-12.3" y="-12.7" width="24.6" height="25.5" rx="3.2" transform="translate(368.3 353.0) rotate(-38.3)" fill="#625a4f"/><rect x="-12.9" y="-12.8" width="25.9" height="25.6" rx="3.2" transform="translate(388.9 376.1) rotate(-42.5)" fill="#625a4f"/><rect x="-12.5" y="-12.7" width="25.1" height="25.5" rx="3.2" transform="translate(405.2 397.9) rotate(-38.2)" fill="#625a4f"/><rect x="-13.6" y="-14.1" width="27.2" height="28.2" rx="3.2" transform="translate(86.4 -14.8) rotate(-43.5)" fill="#625a4f"/><rect x="-12.5" y="-12.8" width="25.0" height="25.6" rx="3.2" transform="translate(106.1 7.5) rotate(-45.4)" fill="#625a4f"/><rect x="-12.7" y="-13.0" width="25.4" height="26.0" rx="3.2" transform="translate(123.6 29.2) rotate(-39.5)" fill="#625a4f"/><rect x="-12.4" y="-12.3" width="24.7" height="24.7" rx="3.2" transform="translate(143.6 50.0) rotate(-36.5)" fill="#625a4f"/><rect x="-12.9" y="-12.4" width="25.7" height="24.8" rx="3.2" transform="translate(162.3 70.8) rotate(-41.7)" fill="#625a4f"/><rect x="-13.2" y="-13.4" width="26.3" height="26.8" rx="3.2" transform="translate(181.9 94.5) rotate(-39.8)" fill="#625a4f"/><rect x="-12.2" y="-11.7" width="24.5" height="23.4" rx="3.2" transform="translate(199.8 117.3) rotate(-42.1)" fill="#625a4f"/><rect x="-13.5" y="-13.5" width="27.0" height="26.9" rx="3.2" transform="translate(218.6 137.2) rotate(-40.1)" fill="#625a4f"/><rect x="-13.5" y="-13.5" width="27.0" height="27.0" rx="3.2" transform="translate(238.8 161.1) rotate(-41.9)" fill="#625a4f"/><rect x="-13.4" y="-13.6" width="26.8" height="27.3" rx="3.2" transform="translate(257.9 182.7) rotate(-41.5)" fill="#625a4f"/><rect x="-12.8" y="-12.6" width="25.6" height="25.2" rx="3.2" transform="translate(276.1 203.7) rotate(-38.3)" fill="#625a4f"/><rect x="-12.9" y="-12.7" width="25.8" height="25.5" rx="3.2" transform="translate(295.3 225.5) rotate(-37.0)" fill="#625a4f"/><rect x="-12.6" y="-12.9" width="25.3" height="25.8" rx="3.2" transform="translate(315.9 247.1) rotate(-36.5)" fill="#625a4f"/><rect x="-13.2" y="-12.9" width="26.4" height="25.7" rx="3.2" transform="translate(334.1 269.3) rotate(-38.3)" fill="#625a4f"/><rect x="-12.8" y="-13.1" width="25.6" height="26.3" rx="3.2" transform="translate(353.4 292.0) rotate(-43.4)" fill="#625a4f"/><rect x="-13.7" y="-13.3" width="27.4" height="26.7" rx="3.2" transform="translate(371.3 312.3) rotate(-36.9)" fill="#625a4f"/><rect x="-13.1" y="-13.3" width="26.2" height="26.7" rx="3.2" transform="translate(389.9 335.9) rotate(-38.4)" fill="#625a4f"/><rect x="-13.3" y="-13.3" width="26.5" height="26.7" rx="3.2" transform="translate(410.2 356.6) rotate(-40.6)" fill="#625a4f"/><rect x="-12.7" y="-12.6" width="25.3" height="25.2" rx="3.2" transform="translate(127.2 -13.0) rotate(-37.9)" fill="#625a4f"/><rect x="-12.5" y="-12.2" width="25.1" height="24.4" rx="3.2" transform="translate(146.4 9.6) rotate(-39.8)" fill="#625a4f"/><rect x="-13.4" y="-13.9" width="26.9" height="27.9" rx="3.2" transform="translate(165.2 32.9) rotate(-39.2)" fill="#625a4f"/><rect x="-12.5" y="-13.0" width="25.0" height="26.0" rx="3.2" transform="translate(183.3 53.6) rotate(-37.3)" fill="#625a4f"/><rect x="-13.2" y="-12.7" width="26.5" height="25.4" rx="3.2" transform="translate(202.4 75.4) rotate(-37.6)" fill="#625a4f"/><rect x="-12.3" y="-12.1" width="24.5" height="24.2" rx="3.2" transform="translate(222.4 97.1) rotate(-36.2)" fill="#625a4f"/><rect x="-13.2" y="-12.9" width="26.5" height="25.7" rx="3.2" transform="translate(242.0 119.5) rotate(-43.3)" fill="#625a4f"/><rect x="-12.9" y="-12.6" width="25.8" height="25.3" rx="3.2" transform="translate(260.9 140.9) rotate(-40.4)" fill="#625a4f"/><rect x="-12.2" y="-12.0" width="24.4" height="24.0" rx="3.2" transform="translate(278.8 162.7) rotate(-40.1)" fill="#625a4f"/><rect x="-12.9" y="-12.9" width="25.8" height="25.8" rx="3.2" transform="translate(297.2 184.2) rotate(-42.9)" fill="#625a4f"/><rect x="-13.0" y="-12.8" width="25.9" height="25.7" rx="3.2" transform="translate(318.5 206.3) rotate(-42.1)" fill="#625a4f"/><rect x="-13.0" y="-13.3" width="26.0" height="26.7" rx="3.2" transform="translate(336.3 228.3) rotate(-37.1)" fill="#625a4f"/><rect x="-13.1" y="-12.9" width="26.3" height="25.7" rx="3.2" transform="translate(354.0 249.8) rotate(-44.1)" fill="#625a4f"/><rect x="-13.2" y="-13.5" width="26.5" height="27.1" rx="3.2" transform="translate(375.7 272.2) rotate(-41.5)" fill="#625a4f"/><rect x="-13.5" y="-12.9" width="26.9" height="25.9" rx="3.2" transform="translate(393.3 294.3) rotate(-43.5)" fill="#625a4f"/><rect x="-12.7" y="-13.1" width="25.3" height="26.2" rx="3.2" transform="translate(413.5 315.2) rotate(-40.8)" fill="#625a4f"/><rect x="-13.2" y="-13.4" width="26.4" height="26.7" rx="3.2" transform="translate(167.1 -9.5) rotate(-42.2)" fill="#625a4f"/><rect x="-12.9" y="-12.8" width="25.9" height="25.6" rx="3.2" transform="translate(187.4 12.0) rotate(-40.7)" fill="#625a4f"/><rect x="-12.4" y="-12.5" width="24.8" height="25.1" rx="3.2" transform="translate(204.4 34.1) rotate(-36.9)" fill="#625a4f"/><rect x="-13.3" y="-13.4" width="26.7" height="26.9" rx="3.2" transform="translate(224.4 56.7) rotate(-43.6)" fill="#625a4f"/><rect x="-12.5" y="-12.4" width="25.0" height="24.9" rx="3.2" transform="translate(243.9 79.0) rotate(-37.6)" fill="#625a4f"/><rect x="-13.3" y="-12.7" width="26.6" height="25.5" rx="3.2" transform="translate(263.8 100.2) rotate(-37.7)" fill="#625a4f"/><rect x="-12.8" y="-12.3" width="25.5" height="24.6" rx="3.2" transform="translate(280.9 121.7) rotate(-45.5)" fill="#625a4f"/><rect x="-12.3" y="-11.8" width="24.5" height="23.6" rx="3.2" transform="translate(302.0 143.3) rotate(-43.1)" fill="#625a4f"/><rect x="-12.5" y="-12.5" width="24.9" height="25.0" rx="3.2" transform="translate(318.9 165.3) rotate(-42.2)" fill="#625a4f"/><rect x="-12.8" y="-12.8" width="25.6" height="25.5" rx="3.2" transform="translate(338.7 188.2) rotate(-45.6)" fill="#625a4f"/><rect x="-13.1" y="-13.0" width="26.2" height="25.9" rx="3.2" transform="translate(358.0 208.5) rotate(-40.6)" fill="#625a4f"/><rect x="-13.3" y="-13.1" width="26.5" height="26.2" rx="3.2" transform="translate(377.5 229.8) rotate(-38.9)" fill="#625a4f"/><rect x="-13.4" y="-13.6" width="26.8" height="27.2" rx="3.2" transform="translate(396.3 251.5) rotate(-36.8)" fill="#625a4f"/><rect x="-13.3" y="-12.9" width="26.7" height="25.8" rx="3.2" transform="translate(414.5 275.3) rotate(-36.2)" fill="#625a4f"/><rect x="-12.4" y="-12.6" width="24.8" height="25.2" rx="3.2" transform="translate(208.3 -7.4) rotate(-38.7)" fill="#625a4f"/><rect x="-13.5" y="-13.7" width="27.0" height="27.4" rx="3.2" transform="translate(228.8 14.7) rotate(-36.3)" fill="#625a4f"/><rect x="-12.9" y="-12.6" width="25.8" height="25.3" rx="3.2" transform="translate(247.0 38.0) rotate(-40.0)" fill="#625a4f"/><rect x="-12.4" y="-12.5" width="24.8" height="25.1" rx="3.2" transform="translate(266.0 59.0) rotate(-39.2)" fill="#625a4f"/><rect x="-13.4" y="-13.3" width="26.8" height="26.6" rx="3.2" transform="translate(286.5 80.6) rotate(-36.8)" fill="#625a4f"/><rect x="-12.7" y="-13.3" width="25.5" height="26.7" rx="3.2" transform="translate(303.8 102.6) rotate(-45.5)" fill="#625a4f"/><rect x="-12.8" y="-13.0" width="25.7" height="25.9" rx="3.2" transform="translate(322.1 124.0) rotate(-38.4)" fill="#625a4f"/><rect x="-13.5" y="-13.2" width="27.1" height="26.4" rx="3.2" transform="translate(341.6 146.2) rotate(-45.9)" fill="#625a4f"/><rect x="-13.3" y="-12.8" width="26.6" height="25.6" rx="3.2" transform="translate(361.8 167.7) rotate(-39.2)" fill="#625a4f"/><rect x="-12.3" y="-12.8" width="24.6" height="25.6" rx="3.2" transform="translate(379.5 190.7) rotate(-42.6)" fill="#625a4f"/><rect x="-12.9" y="-13.4" width="25.8" height="26.8" rx="3.2" transform="translate(398.9 213.4) rotate(-38.1)" fill="#625a4f"/><rect x="-13.1" y="-12.6" width="26.1" height="25.2" rx="3.2" transform="translate(250.3 -2.6) rotate(-37.9)" fill="#625a4f"/><rect x="-12.3" y="-12.2" width="24.7" height="24.5" rx="3.2" transform="translate(268.1 18.9) rotate(-44.4)" fill="#625a4f"/><rect x="-13.2" y="-13.1" width="26.3" height="26.3" rx="3.2" transform="translate(289.0 39.3) rotate(-38.2)" fill="#625a4f"/><rect x="-12.8" y="-12.8" width="25.6" height="25.7" rx="3.2" transform="translate(306.6 60.9) rotate(-38.9)" fill="#625a4f"/><rect x="-12.4" y="-11.9" width="24.8" height="23.7" rx="3.2" transform="translate(326.4 83.6) rotate(-44.4)" fill="#625a4f"/><rect x="-12.9" y="-13.0" width="25.8" height="26.0" rx="3.2" transform="translate(345.5 104.5) rotate(-43.2)" fill="#625a4f"/><rect x="-13.0" y="-12.5" width="26.0" height="25.1" rx="3.2" transform="translate(364.2 126.7) rotate(-37.2)" fill="#625a4f"/><rect x="-13.1" y="-13.3" width="26.2" height="26.6" rx="3.2" transform="translate(381.8 149.7) rotate(-41.9)" fill="#625a4f"/><rect x="-12.4" y="-11.9" width="24.7" height="23.9" rx="3.2" transform="translate(401.6 170.7) rotate(-44.0)" fill="#625a4f"/><rect x="-13.0" y="-12.4" width="26.0" height="24.8" rx="3.2" transform="translate(289.9 -1.8) rotate(-45.0)" fill="#625a4f"/><rect x="-12.7" y="-13.0" width="25.4" height="26.0" rx="3.2" transform="translate(310.4 20.6) rotate(-41.0)" fill="#625a4f"/><rect x="-12.9" y="-12.9" width="25.8" height="25.9" rx="3.2" transform="translate(329.9 43.0) rotate(-40.2)" fill="#625a4f"/><rect x="-12.3" y="-12.6" width="24.6" height="25.2" rx="3.2" transform="translate(348.4 65.3) rotate(-39.8)" fill="#625a4f"/><rect x="-13.6" y="-13.2" width="27.2" height="26.4" rx="3.2" transform="translate(367.7 87.2) rotate(-40.4)" fill="#625a4f"/><rect x="-13.3" y="-13.1" width="26.6" height="26.1" rx="3.2" transform="translate(385.6 109.6) rotate(-37.2)" fill="#625a4f"/><rect x="-12.6" y="-12.1" width="25.2" height="24.2" rx="3.2" transform="translate(403.4 130.7) rotate(-38.9)" fill="#625a4f"/><rect x="-13.1" y="-13.7" width="26.3" height="27.4" rx="3.2" transform="translate(311.5 -20.7) rotate(-40.1)" fill="#625a4f"/><rect x="-12.8" y="-12.2" width="25.6" height="24.4" rx="3.2" transform="translate(332.8 1.9) rotate(-42.7)" fill="#625a4f"/><rect x="-12.6" y="-12.8" width="25.2" height="25.7" rx="3.2" transform="translate(351.2 25.0) rotate(-45.0)" fill="#625a4f"/><rect x="-13.4" y="-13.2" width="26.8" height="26.4" rx="3.2" transform="translate(369.1 45.8) rotate(-36.2)" fill="#625a4f"/><rect x="-12.2" y="-12.0" width="24.4" height="24.0" rx="3.2" transform="translate(388.2 68.2) rotate(-37.0)" fill="#625a4f"/><rect x="-12.3" y="-12.1" width="24.6" height="24.2" rx="3.2" transform="translate(407.3 89.8) rotate(-43.2)" fill="#625a4f"/><rect x="-12.9" y="-12.7" width="25.8" height="25.3" rx="3.2" transform="translate(353.4 -18.0) rotate(-40.5)" fill="#625a4f"/><rect x="-13.6" y="-14.0" width="27.2" height="28.0" rx="3.2" transform="translate(372.1 5.9) rotate(-37.2)" fill="#625a4f"/><rect x="-13.3" y="-13.8" width="26.6" height="27.6" rx="3.2" transform="translate(392.2 27.8) rotate(-43.9)" fill="#625a4f"/><rect x="-12.9" y="-12.5" width="25.8" height="24.9" rx="3.2" transform="translate(409.0 48.7) rotate(-39.6)" fill="#625a4f"/><rect x="-12.5" y="-12.3" width="25.1" height="24.6" rx="3.2" transform="translate(394.3 -13.1) rotate(-44.0)" fill="#625a4f"/><rect x="-13.1" y="-13.2" width="26.2" height="26.5" rx="3.2" transform="translate(412.1 7.3) rotate(-41.2)" fill="#625a4f"/><rect x="-12.3" y="-12.3" width="24.5" height="24.6" rx="3.2" transform="translate(-23.5 385.6) rotate(-40.9)" fill="#949291" stroke="#a2a09f" stroke-width="0.8"/><rect x="-12.5" y="-12.9" width="25.0" height="25.8" rx="3.2" transform="translate(-5.3 406.3) rotate(-36.1)" fill="#979594" stroke="#a5a3a2" stroke-width="0.8"/><rect x="-12.5" y="-12.2" width="25.0" height="24.4" rx="3.2" transform="translate(-20.5 344.2) rotate(-36.2)" fill="#878380" stroke="#95918e" stroke-width="0.8"/><rect x="-12.3" y="-12.0" width="24.6" height="24.0" rx="3.2" transform="translate(-0.5 366.3) rotate(-41.7)" fill="#898786" stroke="#979594" stroke-width="0.8"/><rect x="-13.2" y="-13.3" width="26.4" height="26.6" rx="3.2" transform="translate(16.6 387.1) rotate(-39.7)" fill="#8e8c8b" stroke="#9c9a99" stroke-width="0.8"/><rect x="-12.7" y="-13.0" width="25.4" height="26.0" rx="3.2" transform="translate(35.8 410.2) rotate(-37.6)" fill="#918f8e" stroke="#9f9d9c" stroke-width="0.8"/><rect x="-13.3" y="-13.1" width="26.7" height="26.2" rx="3.2" transform="translate(-18.4 302.7) rotate(-40.5)" fill="#969593" stroke="#a4a3a1" stroke-width="0.8"/><rect x="-13.5" y="-14.0" width="27.1" height="28.1" rx="3.2" transform="translate(1.5 324.7) rotate(-42.6)" fill="#9c9a98" stroke="#aaa8a6" stroke-width="0.8"/><rect x="-13.6" y="-14.0" width="27.2" height="28.0" rx="3.2" transform="translate(20.8 348.0) rotate(-42.2)" fill="#898887" stroke="#979695" stroke-width="0.8"/><rect x="-13.7" y="-13.9" width="27.4" height="27.7" rx="3.2" transform="translate(39.0 369.1) rotate(-43.6)" fill="#949290" stroke="#a2a09e" stroke-width="0.8"/><rect x="-13.1" y="-12.7" width="26.2" height="25.4" rx="3.2" transform="translate(57.0 391.8) rotate(-44.4)" fill="#86827f" stroke="#94908d" stroke-width="0.8"/><rect x="-13.0" y="-13.1" width="25.9" height="26.3" rx="3.2" transform="translate(76.2 412.7) rotate(-36.1)" fill="#a5a09d" stroke="#b3aeab" stroke-width="0.8"/><rect x="-13.6" y="-13.4" width="27.2" height="26.9" rx="3.2" transform="translate(-16.5 262.7) rotate(-41.4)" fill="#83807f" stroke="#918e8d" stroke-width="0.8"/><rect x="-13.6" y="-13.6" width="27.1" height="27.2" rx="3.2" transform="translate(3.8 286.0) rotate(-40.4)" fill="#8a8887" stroke="#989695" stroke-width="0.8"/><rect x="-13.1" y="-12.6" width="26.2" height="25.3" rx="3.2" transform="translate(22.5 305.7) rotate(-37.8)" fill="#b4b0ad" stroke="#c2bebb" stroke-width="0.8"/><rect x="-13.1" y="-13.5" width="26.1" height="26.9" rx="3.2" transform="translate(42.1 329.3) rotate(-44.1)" fill="#7f7d7b" stroke="#8d8b89" stroke-width="0.8"/><rect x="-13.6" y="-13.8" width="27.2" height="27.6" rx="3.2" transform="translate(60.2 349.2) rotate(-42.9)" fill="#9d9895" stroke="#aba6a3" stroke-width="0.8"/><rect x="-13.1" y="-13.5" width="26.2" height="26.9" rx="3.2" transform="translate(80.6 372.1) rotate(-45.8)" fill="#959290" stroke="#a3a09e" stroke-width="0.8"/><rect x="-12.5" y="-12.5" width="24.9" height="25.0" rx="3.2" transform="translate(98.2 394.3) rotate(-43.4)" fill="#9b9896" stroke="#a9a6a4" stroke-width="0.8"/><rect x="-13.2" y="-12.9" width="26.4" height="25.9" rx="3.2" transform="translate(-11.5 221.1) rotate(-39.6)" fill="#97928f" stroke="#a5a09d" stroke-width="0.8"/><rect x="-13.0" y="-13.0" width="26.0" height="26.1" rx="3.2" transform="translate(6.6 245.1) rotate(-45.5)" fill="#9e9b99" stroke="#aca9a7" stroke-width="0.8"/><rect x="-12.6" y="-12.9" width="25.3" height="25.9" rx="3.2" transform="translate(25.5 264.8) rotate(-43.5)" fill="#92918f" stroke="#a09f9d" stroke-width="0.8"/><rect x="-13.5" y="-14.1" width="27.1" height="28.3" rx="3.2" transform="translate(44.3 287.7) rotate(-45.7)" fill="#a8a6a5" stroke="#b6b4b3" stroke-width="0.8"/><rect x="-12.5" y="-12.5" width="24.9" height="25.1" rx="3.2" transform="translate(64.0 309.7) rotate(-39.6)" fill="#7f7c7a" stroke="#8d8a88" stroke-width="0.8"/><rect x="-13.0" y="-13.0" width="26.0" height="26.0" rx="3.2" transform="translate(82.7 331.6) rotate(-37.5)" fill="#a7a3a0" stroke="#b5b1ae" stroke-width="0.8"/><rect x="-12.4" y="-12.6" width="24.9" height="25.2" rx="3.2" transform="translate(102.1 352.7) rotate(-43.6)" fill="#9c9895" stroke="#aaa6a3" stroke-width="0.8"/><rect x="-13.4" y="-13.1" width="26.8" height="26.1" rx="3.2" transform="translate(121.1 375.5) rotate(-41.1)" fill="#938f8c" stroke="#a19d9a" stroke-width="0.8"/><rect x="-13.3" y="-13.4" width="26.5" height="26.7" rx="3.2" transform="translate(139.4 397.3) rotate(-37.3)" fill="#918e8b" stroke="#9f9c99" stroke-width="0.8"/><rect x="-13.3" y="-13.8" width="26.6" height="27.5" rx="3.2" transform="translate(-10.4 180.3) rotate(-45.8)" fill="#9f9b98" stroke="#ada9a6" stroke-width="0.8"/><rect x="-13.5" y="-13.3" width="27.0" height="26.6" rx="3.2" transform="translate(8.9 202.7) rotate(-38.3)" fill="#8e8c8b" stroke="#9c9a99" stroke-width="0.8"/><rect x="-12.4" y="-12.5" width="24.9" height="25.1" rx="3.2" transform="translate(27.8 223.6) rotate(-45.7)" fill="#8b8a89" stroke="#999897" stroke-width="0.8"/><rect x="-12.4" y="-12.7" width="24.8" height="25.3" rx="3.2" transform="translate(47.0 246.5) rotate(-43.4)" fill="#999694" stroke="#a7a4a2" stroke-width="0.8"/><rect x="-13.3" y="-13.2" width="26.5" height="26.3" rx="3.2" transform="translate(67.3 268.2) rotate(-42.1)" fill="#989694" stroke="#a6a4a2" stroke-width="0.8"/><rect x="-12.7" y="-12.4" width="25.4" height="24.8" rx="3.2" transform="translate(85.8 289.0) rotate(-45.6)" fill="#999796" stroke="#a7a5a4" stroke-width="0.8"/><rect x="-12.6" y="-12.9" width="25.3" height="25.7" rx="3.2" transform="translate(103.9 313.1) rotate(-36.8)" fill="#827d79" stroke="#908b87" stroke-width="0.8"/><rect x="-13.6" y="-14.1" width="27.3" height="28.1" rx="3.2" transform="translate(123.4 334.8) rotate(-43.7)" fill="#8c8885" stroke="#9a9693" stroke-width="0.8"/><rect x="-12.8" y="-12.6" width="25.6" height="25.1" rx="3.2" transform="translate(142.2 354.8) rotate(-41.0)" fill="#878685" stroke="#959493" stroke-width="0.8"/><rect x="-12.9" y="-12.5" width="25.8" height="25.0" rx="3.2" transform="translate(160.7 377.4) rotate(-39.3)" fill="#999694" stroke="#a7a4a2" stroke-width="0.8"/><rect x="-13.1" y="-13.3" width="26.1" height="26.6" rx="3.2" transform="translate(179.5 399.2) rotate(-40.5)" fill="#8b8a89" stroke="#999897" stroke-width="0.8"/><rect x="-12.8" y="-13.0" width="25.6" height="26.1" rx="3.2" transform="translate(-6.7 138.3) rotate(-43.5)" fill="#95918d" stroke="#a39f9b" stroke-width="0.8"/><rect x="-13.3" y="-13.8" width="26.7" height="27.5" rx="3.2" transform="translate(12.5 161.0) rotate(-37.7)" fill="#a19f9d" stroke="#afadab" stroke-width="0.8"/><rect x="-13.4" y="-13.0" width="26.8" height="25.9" rx="3.2" transform="translate(31.3 183.3) rotate(-42.2)" fill="#918c89" stroke="#9f9a97" stroke-width="0.8"/><rect x="-12.2" y="-12.3" width="24.4" height="24.6" rx="3.2" transform="translate(50.3 204.6) rotate(-36.6)" fill="#82817f" stroke="#908f8d" stroke-width="0.8"/><rect x="-12.8" y="-13.3" width="25.6" height="26.6" rx="3.2" transform="translate(69.7 225.8) rotate(-36.1)" fill="#908c89" stroke="#9e9a97" stroke-width="0.8"/><rect x="-12.3" y="-12.0" width="24.5" height="24.0" rx="3.2" transform="translate(87.9 250.4) rotate(-38.7)" fill="#878584" stroke="#959392" stroke-width="0.8"/><rect x="-12.9" y="-12.8" width="25.8" height="25.5" rx="3.2" transform="translate(107.8 269.5) rotate(-42.9)" fill="#938f8d" stroke="#a19d9b" stroke-width="0.8"/><rect x="-12.8" y="-12.9" width="25.6" height="25.9" rx="3.2" transform="translate(127.6 293.1) rotate(-38.3)" fill="#959392" stroke="#a3a1a0" stroke-width="0.8"/><rect x="-12.4" y="-12.0" width="24.8" height="24.1" rx="3.2" transform="translate(146.3 313.8) rotate(-44.9)" fill="#908c89" stroke="#9e9a97" stroke-width="0.8"/><rect x="-12.4" y="-12.2" width="24.8" height="24.3" rx="3.2" transform="translate(165.0 335.5) rotate(-45.8)" fill="#868380" stroke="#94918e" stroke-width="0.8"/><rect x="-12.9" y="-12.8" width="25.8" height="25.5" rx="3.2" transform="translate(183.1 357.8) rotate(-43.4)" fill="#8c8a88" stroke="#9a9896" stroke-width="0.8"/><rect x="-12.7" y="-12.2" width="25.3" height="24.3" rx="3.2" transform="translate(201.0 380.4) rotate(-44.2)" fill="#8f8a87" stroke="#9d9895" stroke-width="0.8"/><rect x="-12.8" y="-13.2" width="25.6" height="26.4" rx="3.2" transform="translate(222.4 403.4) rotate(-42.0)" fill="#9b9896" stroke="#a9a6a4" stroke-width="0.8"/><rect x="-13.3" y="-12.9" width="26.7" height="25.7" rx="3.2" transform="translate(-22.8 78.2) rotate(-36.1)" fill="#949290" stroke="#a2a09e" stroke-width="0.8"/><rect x="-12.5" y="-12.2" width="24.9" height="24.4" rx="3.2" transform="translate(-3.2 99.9) rotate(-39.2)" fill="#979390" stroke="#a5a19e" stroke-width="0.8"/><rect x="-12.7" y="-13.3" width="25.5" height="26.6" rx="3.2" transform="translate(15.8 119.6) rotate(-44.5)" fill="#9f9d9b" stroke="#adaba9" stroke-width="0.8"/><rect x="-13.5" y="-14.0" width="27.1" height="27.9" rx="3.2" transform="translate(34.3 142.2) rotate(-39.7)" fill="#8f8c89" stroke="#9d9a97" stroke-width="0.8"/><rect x="-13.5" y="-13.7" width="26.9" height="27.4" rx="3.2" transform="translate(53.4 164.7) rotate(-41.5)" fill="#8c8a89" stroke="#9a9897" stroke-width="0.8"/><rect x="-13.1" y="-13.1" width="26.1" height="26.2" rx="3.2" transform="translate(72.5 186.0) rotate(-45.7)" fill="#8e8a88" stroke="#9c9896" stroke-width="0.8"/><rect x="-13.1" y="-13.6" width="26.2" height="27.2" rx="3.2" transform="translate(91.4 208.0) rotate(-44.5)" fill="#9a9794" stroke="#a8a5a2" stroke-width="0.8"/><rect x="-13.7" y="-13.6" width="27.4" height="27.1" rx="3.2" transform="translate(111.1 231.2) rotate(-37.3)" fill="#94908d" stroke="#a29e9b" stroke-width="0.8"/><rect x="-12.6" y="-13.0" width="25.1" height="25.9" rx="3.2" transform="translate(129.4 253.7) rotate(-39.5)" fill="#898684" stroke="#979492" stroke-width="0.8"/><rect x="-12.3" y="-12.7" width="24.6" height="25.5" rx="3.2" transform="translate(149.8 273.9) rotate(-38.9)" fill="#9a9592" stroke="#a8a3a0" stroke-width="0.8"/><rect x="-13.0" y="-13.4" width="26.0" height="26.9" rx="3.2" transform="translate(167.4 296.9) rotate(-44.0)" fill="#868381" stroke="#94918f" stroke-width="0.8"/><rect x="-12.9" y="-12.6" width="25.9" height="25.3" rx="3.2" transform="translate(186.2 318.4) rotate(-38.0)" fill="#a39f9c" stroke="#b1adaa" stroke-width="0.8"/><rect x="-13.6" y="-13.9" width="27.1" height="27.8" rx="3.2" transform="translate(206.6 339.5) rotate(-44.5)" fill="#9b9895" stroke="#a9a6a3" stroke-width="0.8"/><rect x="-13.5" y="-13.0" width="26.9" height="26.0" rx="3.2" transform="translate(223.5 361.0) rotate(-44.2)" fill="#a09c98" stroke="#aeaaa6" stroke-width="0.8"/><rect x="-13.6" y="-13.0" width="27.1" height="26.1" rx="3.2" transform="translate(243.9 384.3) rotate(-36.1)" fill="#979391" stroke="#a5a19f" stroke-width="0.8"/><rect x="-13.2" y="-13.1" width="26.4" height="26.2" rx="3.2" transform="translate(262.2 406.0) rotate(-45.8)" fill="#a09e9d" stroke="#aeacab" stroke-width="0.8"/><rect x="-12.7" y="-13.1" width="25.4" height="26.2" rx="3.2" transform="translate(-19.7 34.9) rotate(-37.5)" fill="#a5a3a1" stroke="#b3b1af" stroke-width="0.8"/><rect x="-12.7" y="-12.6" width="25.5" height="25.2" rx="3.2" transform="translate(-0.7 57.9) rotate(-38.8)" fill="#a7a5a4" stroke="#b5b3b2" stroke-width="0.8"/><rect x="-13.6" y="-13.1" width="27.2" height="26.1" rx="3.2" transform="translate(18.1 79.3) rotate(-39.7)" fill="#a4a09d" stroke="#b2aeab" stroke-width="0.8"/><rect x="-13.1" y="-13.7" width="26.2" height="27.3" rx="3.2" transform="translate(36.8 101.5) rotate(-36.2)" fill="#8a8784" stroke="#989592" stroke-width="0.8"/><rect x="-13.2" y="-13.4" width="26.3" height="26.8" rx="3.2" transform="translate(56.9 122.6) rotate(-36.0)" fill="#979390" stroke="#a5a19e" stroke-width="0.8"/><rect x="-13.7" y="-13.3" width="27.4" height="26.7" rx="3.2" transform="translate(74.2 146.2) rotate(-42.3)" fill="#848281" stroke="#92908f" stroke-width="0.8"/><rect x="-12.3" y="-11.9" width="24.7" height="23.9" rx="3.2" transform="translate(93.3 167.8) rotate(-39.5)" fill="#9f9b98" stroke="#ada9a6" stroke-width="0.8"/><rect x="-13.4" y="-12.9" width="26.7" height="25.8" rx="3.2" transform="translate(113.8 189.5) rotate(-41.3)" fill="#94908e" stroke="#a29e9c" stroke-width="0.8"/><rect x="-13.5" y="-13.0" width="27.1" height="25.9" rx="3.2" transform="translate(131.9 212.7) rotate(-42.5)" fill="#aca7a3" stroke="#bab5b1" stroke-width="0.8"/><rect x="-13.0" y="-12.5" width="25.9" height="25.0" rx="3.2" transform="translate(151.4 233.1) rotate(-40.3)" fill="#a3a19f" stroke="#b1afad" stroke-width="0.8"/><rect x="-12.6" y="-13.0" width="25.3" height="25.9" rx="3.2" transform="translate(168.8 254.8) rotate(-43.5)" fill="#a19e9c" stroke="#afacaa" stroke-width="0.8"/><rect x="-12.9" y="-13.3" width="25.8" height="26.6" rx="3.2" transform="translate(188.3 276.1) rotate(-45.0)" fill="#979391" stroke="#a5a19f" stroke-width="0.8"/><rect x="-13.0" y="-12.9" width="26.0" height="25.8" rx="3.2" transform="translate(208.4 297.4) rotate(-39.9)" fill="#a39e9a" stroke="#b1aca8" stroke-width="0.8"/><rect x="-13.4" y="-13.7" width="26.9" height="27.4" rx="3.2" transform="translate(228.8 320.9) rotate(-38.9)" fill="#918f8e" stroke="#9f9d9c" stroke-width="0.8"/><rect x="-12.4" y="-12.1" width="24.7" height="24.3" rx="3.2" transform="translate(245.7 343.1) rotate(-36.3)" fill="#939291" stroke="#a1a09f" stroke-width="0.8"/><rect x="-12.6" y="-12.1" width="25.2" height="24.3" rx="3.2" transform="translate(266.3 364.8) rotate(-36.8)" fill="#9e9d9c" stroke="#acabaa" stroke-width="0.8"/><rect x="-13.5" y="-14.1" width="27.1" height="28.1" rx="3.2" transform="translate(284.1 386.5) rotate(-40.3)" fill="#989492" stroke="#a6a2a0" stroke-width="0.8"/><rect x="-12.6" y="-12.4" width="25.2" height="24.9" rx="3.2" transform="translate(304.1 408.9) rotate(-41.7)" fill="#8d8986" stroke="#9b9794" stroke-width="0.8"/><rect x="-13.7" y="-14.1" width="27.4" height="28.1" rx="3.2" transform="translate(-17.3 -4.1) rotate(-42.7)" fill="#9c9a99" stroke="#aaa8a7" stroke-width="0.8"/><rect x="-13.3" y="-12.8" width="26.7" height="25.6" rx="3.2" transform="translate(2.1 18.0) rotate(-39.8)" fill="#969594" stroke="#a4a3a2" stroke-width="0.8"/><rect x="-12.2" y="-12.8" width="24.5" height="25.5" rx="3.2" transform="translate(21.7 39.7) rotate(-38.5)" fill="#84807e" stroke="#928e8c" stroke-width="0.8"/><rect x="-13.7" y="-14.2" width="27.4" height="28.4" rx="3.2" transform="translate(39.2 59.7) rotate(-45.3)" fill="#94908d" stroke="#a29e9b" stroke-width="0.8"/><rect x="-12.8" y="-12.7" width="25.5" height="25.4" rx="3.2" transform="translate(59.4 82.1) rotate(-41.6)" fill="#888482" stroke="#969290" stroke-width="0.8"/><rect x="-13.5" y="-13.7" width="26.9" height="27.3" rx="3.2" transform="translate(76.9 104.9) rotate(-40.5)" fill="#92908f" stroke="#a09e9d" stroke-width="0.8"/><rect x="-13.6" y="-13.7" width="27.3" height="27.4" rx="3.2" transform="translate(95.6 126.4) rotate(-36.8)" fill="#8e8c8a" stroke="#9c9a98" stroke-width="0.8"/><rect x="-13.5" y="-13.5" width="27.0" height="27.0" rx="3.2" transform="translate(115.3 148.7) rotate(-45.7)" fill="#7c7a79" stroke="#8a8887" stroke-width="0.8"/><rect x="-13.6" y="-13.6" width="27.2" height="27.2" rx="3.2" transform="translate(134.7 170.1) rotate(-39.1)" fill="#8f8c89" stroke="#9d9a97" stroke-width="0.8"/><rect x="-13.1" y="-12.7" width="26.2" height="25.4" rx="3.2" transform="translate(154.3 192.9) rotate(-42.5)" fill="#a2a09f" stroke="#b0aead" stroke-width="0.8"/><rect x="-13.0" y="-12.8" width="26.0" height="25.7" rx="3.2" transform="translate(172.2 214.3) rotate(-40.3)" fill="#a09d9a" stroke="#aeaba8" stroke-width="0.8"/><rect x="-12.7" y="-12.9" width="25.4" height="25.9" rx="3.2" transform="translate(192.6 235.1) rotate(-43.7)" fill="#8a8582" stroke="#989390" stroke-width="0.8"/><rect x="-12.6" y="-12.1" width="25.2" height="24.1" rx="3.2" transform="translate(211.1 258.7) rotate(-37.8)" fill="#8d8a87" stroke="#9b9895" stroke-width="0.8"/><rect x="-13.7" y="-14.2" width="27.3" height="28.3" rx="3.2" transform="translate(230.3 280.3) rotate(-41.4)" fill="#85827f" stroke="#93908d" stroke-width="0.8"/><rect x="-12.4" y="-12.1" width="24.7" height="24.2" rx="3.2" transform="translate(248.7 301.1) rotate(-37.5)" fill="#9c9895" stroke="#aaa6a3" stroke-width="0.8"/><rect x="-12.4" y="-13.0" width="24.9" height="25.9" rx="3.2" transform="translate(267.7 324.6) rotate(-38.4)" fill="#858381" stroke="#93918f" stroke-width="0.8"/><rect x="-12.5" y="-12.2" width="25.1" height="24.3" rx="3.2" transform="translate(287.2 344.0) rotate(-40.7)" fill="#8f8b88" stroke="#9d9996" stroke-width="0.8"/><rect x="-13.6" y="-13.8" width="27.2" height="27.6" rx="3.2" transform="translate(305.9 366.3) rotate(-42.4)" fill="#97928f" stroke="#a5a09d" stroke-width="0.8"/><rect x="-13.5" y="-13.8" width="27.0" height="27.5" rx="3.2" transform="translate(326.6 388.8) rotate(-43.4)" fill="#83817f" stroke="#918f8d" stroke-width="0.8"/><rect x="-12.6" y="-12.1" width="25.2" height="24.3" rx="3.2" transform="translate(343.0 410.5) rotate(-41.2)" fill="#8a8886" stroke="#989694" stroke-width="0.8"/><rect x="-13.1" y="-13.6" width="26.1" height="27.3" rx="3.2" transform="translate(23.4 -3.1) rotate(-39.1)" fill="#8f8e8d" stroke="#9d9c9b" stroke-width="0.8"/><rect x="-12.5" y="-12.5" width="25.0" height="25.0" rx="3.2" transform="translate(44.0 19.9) rotate(-42.5)" fill="#8f8c8a" stroke="#9d9a98" stroke-width="0.8"/><rect x="-12.8" y="-12.8" width="25.7" height="25.6" rx="3.2" transform="translate(61.3 41.2) rotate(-45.2)" fill="#94908d" stroke="#a29e9b" stroke-width="0.8"/><rect x="-12.7" y="-12.5" width="25.3" height="24.9" rx="3.2" transform="translate(80.9 63.8) rotate(-39.0)" fill="#a1a09f" stroke="#afaead" stroke-width="0.8"/><rect x="-13.6" y="-14.0" width="27.2" height="28.0" rx="3.2" transform="translate(101.5 85.8) rotate(-36.7)" fill="#938e8b" stroke="#a19c99" stroke-width="0.8"/><rect x="-13.1" y="-13.6" width="26.2" height="27.3" rx="3.2" transform="translate(117.9 108.3) rotate(-45.1)" fill="#85817f" stroke="#938f8d" stroke-width="0.8"/><rect x="-12.4" y="-12.8" width="24.7" height="25.6" rx="3.2" transform="translate(138.7 130.2) rotate(-36.4)" fill="#888786" stroke="#969594" stroke-width="0.8"/><rect x="-13.1" y="-13.4" width="26.1" height="26.8" rx="3.2" transform="translate(155.2 151.1) rotate(-37.9)" fill="#9d9a97" stroke="#aba8a5" stroke-width="0.8"/><rect x="-13.7" y="-14.1" width="27.3" height="28.1" rx="3.2" transform="translate(174.3 173.1) rotate(-41.9)" fill="#85817e" stroke="#938f8c" stroke-width="0.8"/><rect x="-13.1" y="-13.1" width="26.2" height="26.2" rx="3.2" transform="translate(194.4 195.0) rotate(-42.6)" fill="#a7a5a4" stroke="#b5b3b2" stroke-width="0.8"/><rect x="-13.5" y="-13.1" width="27.0" height="26.3" rx="3.2" transform="translate(214.3 216.5) rotate(-44.5)" fill="#959391" stroke="#a3a19f" stroke-width="0.8"/><rect x="-13.2" y="-12.9" width="26.4" height="25.8" rx="3.2" transform="translate(232.5 239.2) rotate(-40.8)" fill="#959391" stroke="#a3a19f" stroke-width="0.8"/><rect x="-12.5" y="-12.3" width="25.1" height="24.6" rx="3.2" transform="translate(252.2 261.8) rotate(-42.7)" fill="#888685" stroke="#969493" stroke-width="0.8"/><rect x="-13.3" y="-13.0" width="26.7" height="26.1" rx="3.2" transform="translate(271.8 282.5) rotate(-43.8)" fill="#969493" stroke="#a4a2a1" stroke-width="0.8"/><rect x="-12.7" y="-13.2" width="25.5" height="26.5" rx="3.2" transform="translate(290.8 305.5) rotate(-36.1)" fill="#858280" stroke="#93908e" stroke-width="0.8"/><rect x="-13.4" y="-13.2" width="26.8" height="26.5" rx="3.2" transform="translate(308.3 325.8) rotate(-43.1)" fill="#989694" stroke="#a6a4a2" stroke-width="0.8"/><rect x="-13.4" y="-12.8" width="26.9" height="25.7" rx="3.2" transform="translate(328.8 348.5) rotate(-41.0)" fill="#7f7c7a" stroke="#8d8a88" stroke-width="0.8"/><rect x="-13.5" y="-14.1" width="27.0" height="28.1" rx="3.2" transform="translate(346.2 369.4) rotate(-36.7)" fill="#989695" stroke="#a6a4a3" stroke-width="0.8"/><rect x="-13.3" y="-13.8" width="26.5" height="27.6" rx="3.2" transform="translate(366.7 393.1) rotate(-44.1)" fill="#8f8d8c" stroke="#9d9b9a" stroke-width="0.8"/><rect x="-12.9" y="-12.7" width="25.8" height="25.5" rx="3.2" transform="translate(384.8 414.8) rotate(-44.8)" fill="#a49f9c" stroke="#b2adaa" stroke-width="0.8"/><rect x="-12.4" y="-12.1" width="24.9" height="24.1" rx="3.2" transform="translate(45.8 -22.8) rotate(-38.6)" fill="#939291" stroke="#a1a09f" stroke-width="0.8"/><rect x="-13.4" y="-13.4" width="26.8" height="26.8" rx="3.2" transform="translate(63.3 0.4) rotate(-39.5)" fill="#878583" stroke="#959391" stroke-width="0.8"/><rect x="-12.6" y="-12.7" width="25.2" height="25.5" rx="3.2" transform="translate(83.1 22.2) rotate(-42.3)" fill="#9c9b9a" stroke="#aaa9a8" stroke-width="0.8"/><rect x="-12.7" y="-13.2" width="25.5" height="26.4" rx="3.2" transform="translate(102.9 44.9) rotate(-40.2)" fill="#949290" stroke="#a2a09e" stroke-width="0.8"/><rect x="-12.6" y="-13.1" width="25.1" height="26.1" rx="3.2" transform="translate(121.7 66.8) rotate(-37.5)" fill="#8b8683" stroke="#999491" stroke-width="0.8"/><rect x="-13.7" y="-13.4" width="27.4" height="26.8" rx="3.2" transform="translate(141.0 87.1) rotate(-44.3)" fill="#969391" stroke="#a4a19f" stroke-width="0.8"/><rect x="-12.6" y="-12.1" width="25.3" height="24.3" rx="3.2" transform="translate(159.8 109.4) rotate(-39.1)" fill="#908b87" stroke="#9e9995" stroke-width="0.8"/><rect x="-13.6" y="-13.6" width="27.2" height="27.2" rx="3.2" transform="translate(178.6 132.6) rotate(-42.2)" fill="#908d8b" stroke="#9e9b99" stroke-width="0.8"/><rect x="-12.9" y="-12.4" width="25.8" height="24.8" rx="3.2" transform="translate(196.9 154.9) rotate(-41.0)" fill="#928f8c" stroke="#a09d9a" stroke-width="0.8"/><rect x="-12.6" y="-12.6" width="25.2" height="25.1" rx="3.2" transform="translate(217.1 176.3) rotate(-45.2)" fill="#a5a19d" stroke="#b3afab" stroke-width="0.8"/><rect x="-13.6" y="-13.6" width="27.1" height="27.1" rx="3.2" transform="translate(236.0 196.8) rotate(-41.7)" fill="#9d9b99" stroke="#aba9a7" stroke-width="0.8"/><rect x="-12.9" y="-12.7" width="25.8" height="25.3" rx="3.2" transform="translate(255.8 220.5) rotate(-37.6)" fill="#817e7c" stroke="#8f8c8a" stroke-width="0.8"/><rect x="-13.4" y="-14.0" width="26.8" height="28.0" rx="3.2" transform="translate(273.7 241.3) rotate(-36.8)" fill="#989491" stroke="#a6a29f" stroke-width="0.8"/><rect x="-13.4" y="-13.8" width="26.8" height="27.6" rx="3.2" transform="translate(293.9 263.8) rotate(-44.2)" fill="#9d9996" stroke="#aba7a4" stroke-width="0.8"/><rect x="-13.0" y="-12.8" width="25.9" height="25.6" rx="3.2" transform="translate(312.3 284.5) rotate(-38.1)" fill="#939291" stroke="#a1a09f" stroke-width="0.8"/><rect x="-13.2" y="-12.6" width="26.3" height="25.3" rx="3.2" transform="translate(332.0 307.9) rotate(-39.3)" fill="#b1aca8" stroke="#bfbab6" stroke-width="0.8"/><rect x="-13.2" y="-13.6" width="26.5" height="27.1" rx="3.2" transform="translate(350.1 330.8) rotate(-36.1)" fill="#9a9896" stroke="#a8a6a4" stroke-width="0.8"/><rect x="-12.3" y="-12.7" width="24.6" height="25.5" rx="3.2" transform="translate(368.7 350.1) rotate(-38.3)" fill="#8d8987" stroke="#9b9795" stroke-width="0.8"/><rect x="-12.9" y="-12.8" width="25.9" height="25.6" rx="3.2" transform="translate(389.3 373.2) rotate(-42.5)" fill="#7a7774" stroke="#888582" stroke-width="0.8"/><rect x="-12.5" y="-12.7" width="25.1" height="25.5" rx="3.2" transform="translate(405.6 395.0) rotate(-38.2)" fill="#898582" stroke="#979390" stroke-width="0.8"/><rect x="-13.6" y="-14.1" width="27.2" height="28.2" rx="3.2" transform="translate(86.8 -17.7) rotate(-43.5)" fill="#96928f" stroke="#a4a09d" stroke-width="0.8"/><rect x="-12.5" y="-12.8" width="25.0" height="25.6" rx="3.2" transform="translate(106.5 4.6) rotate(-45.4)" fill="#85827f" stroke="#93908d" stroke-width="0.8"/><rect x="-12.7" y="-13.0" width="25.4" height="26.0" rx="3.2" transform="translate(124.0 26.3) rotate(-39.5)" fill="#928e8b" stroke="#a09c99" stroke-width="0.8"/><rect x="-12.4" y="-12.3" width="24.7" height="24.7" rx="3.2" transform="translate(144.0 47.1) rotate(-36.5)" fill="#a6a4a2" stroke="#b4b2b0" stroke-width="0.8"/><rect x="-12.9" y="-12.4" width="25.7" height="24.8" rx="3.2" transform="translate(162.7 67.9) rotate(-41.7)" fill="#9d9997" stroke="#aba7a5" stroke-width="0.8"/><rect x="-13.2" y="-13.4" width="26.3" height="26.8" rx="3.2" transform="translate(182.3 91.6) rotate(-39.8)" fill="#979593" stroke="#a5a3a1" stroke-width="0.8"/><rect x="-12.2" y="-11.7" width="24.5" height="23.4" rx="3.2" transform="translate(200.2 114.4) rotate(-42.1)" fill="#969491" stroke="#a4a29f" stroke-width="0.8"/><rect x="-13.5" y="-13.5" width="27.0" height="26.9" rx="3.2" transform="translate(219.0 134.3) rotate(-40.1)" fill="#999490" stroke="#a7a29e" stroke-width="0.8"/><rect x="-13.5" y="-13.5" width="27.0" height="27.0" rx="3.2" transform="translate(239.2 158.2) rotate(-41.9)" fill="#9a9897" stroke="#a8a6a5" stroke-width="0.8"/><rect x="-13.4" y="-13.6" width="26.8" height="27.3" rx="3.2" transform="translate(258.3 179.8) rotate(-41.5)" fill="#9a9896" stroke="#a8a6a4" stroke-width="0.8"/><rect x="-12.8" y="-12.6" width="25.6" height="25.2" rx="3.2" transform="translate(276.5 200.8) rotate(-38.3)" fill="#8a8784" stroke="#989592" stroke-width="0.8"/><rect x="-12.9" y="-12.7" width="25.8" height="25.5" rx="3.2" transform="translate(295.7 222.6) rotate(-37.0)" fill="#989491" stroke="#a6a29f" stroke-width="0.8"/><rect x="-12.6" y="-12.9" width="25.3" height="25.8" rx="3.2" transform="translate(316.3 244.2) rotate(-36.5)" fill="#86827f" stroke="#94908d" stroke-width="0.8"/><rect x="-13.2" y="-12.9" width="26.4" height="25.7" rx="3.2" transform="translate(334.5 266.4) rotate(-38.3)" fill="#9e9b99" stroke="#aca9a7" stroke-width="0.8"/><rect x="-12.8" y="-13.1" width="25.6" height="26.3" rx="3.2" transform="translate(353.8 289.1) rotate(-43.4)" fill="#878685" stroke="#959493" stroke-width="0.8"/><rect x="-13.7" y="-13.3" width="27.4" height="26.7" rx="3.2" transform="translate(371.7 309.4) rotate(-36.9)" fill="#a3a19f" stroke="#b1afad" stroke-width="0.8"/><rect x="-13.1" y="-13.3" width="26.2" height="26.7" rx="3.2" transform="translate(390.3 333.0) rotate(-38.4)" fill="#9d9b99" stroke="#aba9a7" stroke-width="0.8"/><rect x="-13.3" y="-13.3" width="26.5" height="26.7" rx="3.2" transform="translate(410.6 353.7) rotate(-40.6)" fill="#7e7c7b" stroke="#8c8a89" stroke-width="0.8"/><rect x="-12.7" y="-12.6" width="25.3" height="25.2" rx="3.2" transform="translate(127.6 -15.9) rotate(-37.9)" fill="#9a9795" stroke="#a8a5a3" stroke-width="0.8"/><rect x="-12.5" y="-12.2" width="25.1" height="24.4" rx="3.2" transform="translate(146.8 6.7) rotate(-39.8)" fill="#908b88" stroke="#9e9996" stroke-width="0.8"/><rect x="-13.4" y="-13.9" width="26.9" height="27.9" rx="3.2" transform="translate(165.6 30.0) rotate(-39.2)" fill="#8d8a88" stroke="#9b9896" stroke-width="0.8"/><rect x="-12.5" y="-13.0" width="25.0" height="26.0" rx="3.2" transform="translate(183.7 50.7) rotate(-37.3)" fill="#a09c99" stroke="#aeaaa7" stroke-width="0.8"/><rect x="-13.2" y="-12.7" width="26.5" height="25.4" rx="3.2" transform="translate(202.8 72.5) rotate(-37.6)" fill="#949392" stroke="#a2a1a0" stroke-width="0.8"/><rect x="-12.3" y="-12.1" width="24.5" height="24.2" rx="3.2" transform="translate(222.8 94.2) rotate(-36.2)" fill="#a5a4a3" stroke="#b3b2b1" stroke-width="0.8"/><rect x="-13.2" y="-12.9" width="26.5" height="25.7" rx="3.2" transform="translate(242.4 116.6) rotate(-43.3)" fill="#979695" stroke="#a5a4a3" stroke-width="0.8"/><rect x="-12.9" y="-12.6" width="25.8" height="25.3" rx="3.2" transform="translate(261.3 138.0) rotate(-40.4)" fill="#959391" stroke="#a3a19f" stroke-width="0.8"/><rect x="-12.2" y="-12.0" width="24.4" height="24.0" rx="3.2" transform="translate(279.2 159.8) rotate(-40.1)" fill="#93918f" stroke="#a19f9d" stroke-width="0.8"/><rect x="-12.9" y="-12.9" width="25.8" height="25.8" rx="3.2" transform="translate(297.6 181.3) rotate(-42.9)" fill="#9f9b98" stroke="#ada9a6" stroke-width="0.8"/><rect x="-13.0" y="-12.8" width="25.9" height="25.7" rx="3.2" transform="translate(318.9 203.4) rotate(-42.1)" fill="#888481" stroke="#96928f" stroke-width="0.8"/><rect x="-13.0" y="-13.3" width="26.0" height="26.7" rx="3.2" transform="translate(336.7 225.4) rotate(-37.1)" fill="#888582" stroke="#969390" stroke-width="0.8"/><rect x="-13.1" y="-12.9" width="26.3" height="25.7" rx="3.2" transform="translate(354.4 246.9) rotate(-44.1)" fill="#94908d" stroke="#a29e9b" stroke-width="0.8"/><rect x="-13.2" y="-13.5" width="26.5" height="27.1" rx="3.2" transform="translate(376.1 269.3) rotate(-41.5)" fill="#979491" stroke="#a5a29f" stroke-width="0.8"/><rect x="-13.5" y="-12.9" width="26.9" height="25.9" rx="3.2" transform="translate(393.7 291.4) rotate(-43.5)" fill="#b1aca9" stroke="#bfbab7" stroke-width="0.8"/><rect x="-12.7" y="-13.1" width="25.3" height="26.2" rx="3.2" transform="translate(413.9 312.3) rotate(-40.8)" fill="#7b7875" stroke="#898683" stroke-width="0.8"/><rect x="-13.2" y="-13.4" width="26.4" height="26.7" rx="3.2" transform="translate(167.5 -12.4) rotate(-42.2)" fill="#a09b98" stroke="#aea9a6" stroke-width="0.8"/><rect x="-12.9" y="-12.8" width="25.9" height="25.6" rx="3.2" transform="translate(187.8 9.1) rotate(-40.7)" fill="#838180" stroke="#918f8e" stroke-width="0.8"/><rect x="-12.4" y="-12.5" width="24.8" height="25.1" rx="3.2" transform="translate(204.8 31.2) rotate(-36.9)" fill="#9f9c9a" stroke="#adaaa8" stroke-width="0.8"/><rect x="-13.3" y="-13.4" width="26.7" height="26.9" rx="3.2" transform="translate(224.8 53.8) rotate(-43.6)" fill="#93908d" stroke="#a19e9b" stroke-width="0.8"/><rect x="-12.5" y="-12.4" width="25.0" height="24.9" rx="3.2" transform="translate(244.3 76.1) rotate(-37.6)" fill="#a7a6a5" stroke="#b5b4b3" stroke-width="0.8"/><rect x="-13.3" y="-12.7" width="26.6" height="25.5" rx="3.2" transform="translate(264.2 97.3) rotate(-37.7)" fill="#a09c99" stroke="#aeaaa7" stroke-width="0.8"/><rect x="-12.8" y="-12.3" width="25.5" height="24.6" rx="3.2" transform="translate(281.3 118.8) rotate(-45.5)" fill="#989490" stroke="#a6a29e" stroke-width="0.8"/><rect x="-12.3" y="-11.8" width="24.5" height="23.6" rx="3.2" transform="translate(302.4 140.4) rotate(-43.1)" fill="#96928e" stroke="#a4a09c" stroke-width="0.8"/><rect x="-12.5" y="-12.5" width="24.9" height="25.0" rx="3.2" transform="translate(319.3 162.4) rotate(-42.2)" fill="#989695" stroke="#a6a4a3" stroke-width="0.8"/><rect x="-12.8" y="-12.8" width="25.6" height="25.5" rx="3.2" transform="translate(339.1 185.3) rotate(-45.6)" fill="#a4a19f" stroke="#b2afad" stroke-width="0.8"/><rect x="-13.1" y="-13.0" width="26.2" height="25.9" rx="3.2" transform="translate(358.4 205.6) rotate(-40.6)" fill="#95908d" stroke="#a39e9b" stroke-width="0.8"/><rect x="-13.3" y="-13.1" width="26.5" height="26.2" rx="3.2" transform="translate(377.9 226.9) rotate(-38.9)" fill="#959290" stroke="#a3a09e" stroke-width="0.8"/><rect x="-13.4" y="-13.6" width="26.8" height="27.2" rx="3.2" transform="translate(396.7 248.6) rotate(-36.8)" fill="#938f8c" stroke="#a19d9a" stroke-width="0.8"/><rect x="-13.3" y="-12.9" width="26.7" height="25.8" rx="3.2" transform="translate(414.9 272.4) rotate(-36.2)" fill="#9f9b97" stroke="#ada9a5" stroke-width="0.8"/><rect x="-12.4" y="-12.6" width="24.8" height="25.2" rx="3.2" transform="translate(208.7 -10.3) rotate(-38.7)" fill="#817f7d" stroke="#8f8d8b" stroke-width="0.8"/><rect x="-13.5" y="-13.7" width="27.0" height="27.4" rx="3.2" transform="translate(229.2 11.8) rotate(-36.3)" fill="#878381" stroke="#95918f" stroke-width="0.8"/><rect x="-12.9" y="-12.6" width="25.8" height="25.3" rx="3.2" transform="translate(247.4 35.1) rotate(-40.0)" fill="#898887" stroke="#979695" stroke-width="0.8"/><rect x="-12.4" y="-12.5" width="24.8" height="25.1" rx="3.2" transform="translate(266.4 56.1) rotate(-39.2)" fill="#888786" stroke="#969594" stroke-width="0.8"/><rect x="-13.4" y="-13.3" width="26.8" height="26.6" rx="3.2" transform="translate(286.9 77.7) rotate(-36.8)" fill="#918d8b" stroke="#9f9b99" stroke-width="0.8"/><rect x="-12.7" y="-13.3" width="25.5" height="26.7" rx="3.2" transform="translate(304.2 99.7) rotate(-45.5)" fill="#a19e9b" stroke="#afaca9" stroke-width="0.8"/><rect x="-12.8" y="-13.0" width="25.7" height="25.9" rx="3.2" transform="translate(322.5 121.1) rotate(-38.4)" fill="#8f8e8c" stroke="#9d9c9a" stroke-width="0.8"/><rect x="-13.5" y="-13.2" width="27.1" height="26.4" rx="3.2" transform="translate(342.0 143.3) rotate(-45.9)" fill="#8d8b89" stroke="#9b9997" stroke-width="0.8"/><rect x="-13.3" y="-12.8" width="26.6" height="25.6" rx="3.2" transform="translate(362.2 164.8) rotate(-39.2)" fill="#9a9592" stroke="#a8a3a0" stroke-width="0.8"/><rect x="-12.3" y="-12.8" width="24.6" height="25.6" rx="3.2" transform="translate(379.9 187.8) rotate(-42.6)" fill="#999693" stroke="#a7a4a1" stroke-width="0.8"/><rect x="-12.9" y="-13.4" width="25.8" height="26.8" rx="3.2" transform="translate(399.3 210.5) rotate(-38.1)" fill="#979391" stroke="#a5a19f" stroke-width="0.8"/><rect x="-13.1" y="-12.6" width="26.1" height="25.2" rx="3.2" transform="translate(250.7 -5.5) rotate(-37.9)" fill="#84807c" stroke="#928e8a" stroke-width="0.8"/><rect x="-12.3" y="-12.2" width="24.7" height="24.5" rx="3.2" transform="translate(268.5 16.0) rotate(-44.4)" fill="#a7a6a5" stroke="#b5b4b3" stroke-width="0.8"/><rect x="-13.2" y="-13.1" width="26.3" height="26.3" rx="3.2" transform="translate(289.4 36.4) rotate(-38.2)" fill="#ada9a6" stroke="#bbb7b4" stroke-width="0.8"/><rect x="-12.8" y="-12.8" width="25.6" height="25.7" rx="3.2" transform="translate(307.0 58.0) rotate(-38.9)" fill="#827f7c" stroke="#908d8a" stroke-width="0.8"/><rect x="-12.4" y="-11.9" width="24.8" height="23.7" rx="3.2" transform="translate(326.8 80.7) rotate(-44.4)" fill="#989695" stroke="#a6a4a3" stroke-width="0.8"/><rect x="-12.9" y="-13.0" width="25.8" height="26.0" rx="3.2" transform="translate(345.9 101.6) rotate(-43.2)" fill="#7e7b79" stroke="#8c8987" stroke-width="0.8"/><rect x="-13.0" y="-12.5" width="26.0" height="25.1" rx="3.2" transform="translate(364.6 123.8) rotate(-37.2)" fill="#9e9d9c" stroke="#acabaa" stroke-width="0.8"/><rect x="-13.1" y="-13.3" width="26.2" height="26.6" rx="3.2" transform="translate(382.2 146.8) rotate(-41.9)" fill="#837f7c" stroke="#918d8a" stroke-width="0.8"/><rect x="-12.4" y="-11.9" width="24.7" height="23.9" rx="3.2" transform="translate(402.0 167.8) rotate(-44.0)" fill="#8c8885" stroke="#9a9693" stroke-width="0.8"/><rect x="-13.0" y="-12.4" width="26.0" height="24.8" rx="3.2" transform="translate(290.3 -4.7) rotate(-45.0)" fill="#9c9997" stroke="#aaa7a5" stroke-width="0.8"/><rect x="-12.7" y="-13.0" width="25.4" height="26.0" rx="3.2" transform="translate(310.8 17.7) rotate(-41.0)" fill="#8c8987" stroke="#9a9795" stroke-width="0.8"/><rect x="-12.9" y="-12.9" width="25.8" height="25.9" rx="3.2" transform="translate(330.3 40.1) rotate(-40.2)" fill="#a4a09d" stroke="#b2aeab" stroke-width="0.8"/><rect x="-12.3" y="-12.6" width="24.6" height="25.2" rx="3.2" transform="translate(348.8 62.4) rotate(-39.8)" fill="#898582" stroke="#979390" stroke-width="0.8"/><rect x="-13.6" y="-13.2" width="27.2" height="26.4" rx="3.2" transform="translate(368.1 84.3) rotate(-40.4)" fill="#a09e9c" stroke="#aeacaa" stroke-width="0.8"/><rect x="-13.3" y="-13.1" width="26.6" height="26.1" rx="3.2" transform="translate(386.0 106.7) rotate(-37.2)" fill="#989593" stroke="#a6a3a1" stroke-width="0.8"/><rect x="-12.6" y="-12.1" width="25.2" height="24.2" rx="3.2" transform="translate(403.8 127.8) rotate(-38.9)" fill="#928e8b" stroke="#a09c99" stroke-width="0.8"/><rect x="-13.1" y="-13.7" width="26.3" height="27.4" rx="3.2" transform="translate(311.9 -23.6) rotate(-40.1)" fill="#96918e" stroke="#a49f9c" stroke-width="0.8"/><rect x="-12.8" y="-12.2" width="25.6" height="24.4" rx="3.2" transform="translate(333.2 -1.0) rotate(-42.7)" fill="#a39e9b" stroke="#b1aca9" stroke-width="0.8"/><rect x="-12.6" y="-12.8" width="25.2" height="25.7" rx="3.2" transform="translate(351.6 22.1) rotate(-45.0)" fill="#93908e" stroke="#a19e9c" stroke-width="0.8"/><rect x="-13.4" y="-13.2" width="26.8" height="26.4" rx="3.2" transform="translate(369.5 42.9) rotate(-36.2)" fill="#9f9c9a" stroke="#adaaa8" stroke-width="0.8"/><rect x="-12.2" y="-12.0" width="24.4" height="24.0" rx="3.2" transform="translate(388.6 65.3) rotate(-37.0)" fill="#9e9c9b" stroke="#acaaa9" stroke-width="0.8"/><rect x="-12.3" y="-12.1" width="24.6" height="24.2" rx="3.2" transform="translate(407.7 86.9) rotate(-43.2)" fill="#8b8785" stroke="#999593" stroke-width="0.8"/><rect x="-12.9" y="-12.7" width="25.8" height="25.3" rx="3.2" transform="translate(353.8 -20.9) rotate(-40.5)" fill="#92908e" stroke="#a09e9c" stroke-width="0.8"/><rect x="-13.6" y="-14.0" width="27.2" height="28.0" rx="3.2" transform="translate(372.5 3.0) rotate(-37.2)" fill="#8f8d8c" stroke="#9d9b9a" stroke-width="0.8"/><rect x="-13.3" y="-13.8" width="26.6" height="27.6" rx="3.2" transform="translate(392.6 24.9) rotate(-43.9)" fill="#949391" stroke="#a2a19f" stroke-width="0.8"/><rect x="-12.9" y="-12.5" width="25.8" height="24.9" rx="3.2" transform="translate(409.4 45.8) rotate(-39.6)" fill="#a7a4a1" stroke="#b5b2af" stroke-width="0.8"/><rect x="-12.5" y="-12.3" width="25.1" height="24.6" rx="3.2" transform="translate(394.7 -16.0) rotate(-44.0)" fill="#7f7e7d" stroke="#8d8c8b" stroke-width="0.8"/><rect x="-13.1" y="-13.2" width="26.2" height="26.5" rx="3.2" transform="translate(412.5 4.4) rotate(-41.2)" fill="#8d8a87" stroke="#9b9895" stroke-width="0.8"/><ellipse cx="282" cy="286" rx="5.5" ry="8" transform="rotate(35 282 286)" fill="#33301f" opacity="0.9"/><path d="M222 86l-6 8" stroke="#3b3a78" stroke-width="1"/></g><rect width="390" height="390" filter="url(#grim)" opacity="0.17" style="mix-blend-mode:overlay"/></g></svg>
<div class="a" style="left:1805px;top:401px;width:20px;height:20px;background:#0b0f19;border:1px solid #4b5563;border-radius:4px;"></div>
<div class="a" style="left:1829px;top:401px;width:20px;height:20px;background:#0b0f19;border:1px solid #4b5563;border-radius:4px;"></div>
<svg style="left:1805px;top:401px" width="20" height="20" viewBox="0 0 20 20"><path d="M10 5.4v6.4M7 9.2l3 2.8 3-2.800" stroke="#d1d5db" stroke-width="0.950" fill="none" stroke-linecap="round" stroke-linejoin="round"/><path d="M6.200 12.800v1.700h7.600v-1.700" stroke="#c4c8ce" stroke-width="0.950" fill="none" stroke-linecap="round" stroke-linejoin="round"/></svg><svg style="left:1829px;top:401px" width="20" height="20" viewBox="0 0 20 20"><path d="M6.500 6.500l7 7M13.500 6.500l-7 7" stroke="#f3f4f6" stroke-width="1.050" stroke-linecap="round"/></svg>
<div class="a" style="left:1390px;top:799px;width:40px;height:40px;border:3px solid #f97316;background:#96928e;overflow:hidden"><svg style="left:0;top:0" width="34" height="34" viewBox="0 0 34 34"><defs><pattern id="tp" width="3.200" height="3.200" patternUnits="userSpaceOnUse" patternTransform="rotate(-41)"><rect width="3.200" height="3.200" fill="#bcb8b4"/><rect x="0.350" y="0.350" width="2.600" height="2.600" rx="0.500" fill="#94908b"/></pattern><filter id="tb" x="0" y="0" width="100%" height="100%"><feGaussianBlur stdDeviation="0.450"/></filter></defs><rect x="-2" y="-2" width="38" height="38" fill="url(#tp)" filter="url(#tb)"/><rect width="34" height="34" filter="url(#grim)" opacity="0.450" style="mix-blend-mode:overlay"/><ellipse cx="24.600" cy="24.900" rx="0.800" ry="1" fill="#4a4438"/></svg></div>
<div class="a" style="left:1266px;top:863px;width:35px;height:39px;background:linear-gradient(to bottom right,#4b5563,#374151);border:1px solid #4b5563;border-radius:8px;"></div>
<div class="a" style="left:1308px;top:863px;width:35px;height:39px;background:linear-gradient(to bottom right,#4b5563,#374151);border:1px solid #4b5563;border-radius:8px;"></div>
<div class="a" style="left:1350px;top:863px;width:36px;height:39px;background:linear-gradient(to bottom right,#4b5563,#374151);border:1px solid #4b5563;border-radius:8px;"></div>
<div class="a" style="left:1393px;top:863px;width:35px;height:39px;background:linear-gradient(to bottom right,#4b5563,#374151);border:1px solid #4b5563;border-radius:8px;"></div>
<div class="a" style="left:1435px;top:863px;width:35px;height:39px;background:linear-gradient(to bottom right,#4b5563,#374151);border:1px solid #4b5563;border-radius:8px;"></div>
<div class="a" style="left:1477px;top:863px;width:35px;height:39px;background:linear-gradient(to bottom right,#4b5563,#374151);border:1px solid #4b5563;border-radius:8px;"></div>
<div class="a" style="left:1519px;top:863px;width:35px;height:39px;background:linear-gradient(to bottom right,#4b5563,#374151);border:1px solid #4b5563;border-radius:8px;"></div>
<svg style="left:1266px;top:863px" width="35" height="39" viewBox="0 0 35 39"><path d="M9.800 15.400c0-.700.500-1.200 1.200-1.200h3.400c.500 0 .900.200 1.200.600l1.100 1.400h5.500c.700 0 1.200.500 1.200 1.200v9.800c0 .700-.500 1.200-1.200 1.200H11c-.700 0-1.200-.500-1.200-1.200z" fill="#ffb02e"/><path d="M12.600 19.200c.200-.600.700-1 1.300-1h10.800c.900 0 1.500.800 1.200 1.700l-2.400 7.500c-.200.600-.700 1-1.300 1H11c-.800 0-1.400-.700-1.100-1.500z" fill="#fcd53f"/></svg><svg style="left:1308px;top:863px" width="35" height="39" viewBox="0 0 35 39"><path d="M10 13.600c0-.900.700-1.600 1.600-1.600h11.200l3.100 3.100v11.300c0 .900-.700 1.600-1.600 1.600H11.600c-.900 0-1.600-.700-1.600-1.600z" fill="#635994"/><rect x="12.400" y="12" width="10.400" height="5.200" rx="0.600" fill="#321b41"/><rect x="15.400" y="12.400" width="5" height="4.400" fill="#e1d8ec"/><rect x="19.800" y="12.400" width="1.600" height="4.400" fill="#321b41"/><rect x="12.200" y="20.200" width="11.600" height="7.800" rx="0.500" fill="#f1ecf6"/><rect x="12.200" y="20.200" width="11.600" height="1.700" rx="0.500" fill="#f8312f"/></svg><svg style="left:1350px;top:863px" width="36" height="39" viewBox="0 0 36 39"><rect x="18.600" y="13" width="3.600" height="1.600" rx="0.700" fill="#00d26a"/><rect x="10" y="13.800" width="16" height="8.400" rx="1" fill="#8d65c5"/><rect x="11.200" y="14.200" width="13.600" height="7.400" rx="0.600" fill="#fcb932"/><rect x="16" y="14.600" width="3.400" height="1.500" rx="0.700" fill="#47b0e0"/><rect x="13.200" y="16.800" width="3.200" height="1.500" rx="0.700" fill="#f8502f"/><rect x="10" y="21.400" width="16" height="6.600" rx="1" fill="#433b6b"/><rect x="15.800" y="23.600" width="4.400" height="2.400" rx="0.400" fill="#f3eef8"/></svg><svg style="left:1393px;top:863px" width="35" height="39" viewBox="0 0 35 39"><rect x="9.200" y="12" width="16" height="16.300" rx="0.600" fill="#d3883e"/><rect x="10.600" y="13.400" width="13.200" height="13.500" fill="#b4dcff"/><path d="M10.600 18.200l2.800-1.400 2 1.600 3-2.200 2.600 1.600 2.800-2v5H10.600z" fill="#ffffff"/><circle cx="17.400" cy="16.500" r="1.500" fill="#ff9f2e"/><path d="M10.600 22l4-3 3.400 2.600 5.800-4.400v9.700H10.600z" fill="#00a66c"/><path d="M10.600 26.900c2-2.600 10-3.400 13.200-.800v.800z" fill="#86d72f"/><rect x="9.600" y="12.400" width="15.200" height="15.500" rx="0.400" fill="none" stroke="#f3a143" stroke-width="0.800"/></svg><svg style="left:1435px;top:863px" width="35" height="39" viewBox="0 0 35 39"><path d="M17.400 13c4.600 0 8.200 2.600 8.200 6 0 2.400-1.800 3.400-3.600 3.400-1.400 0-2.400.500-2.400 1.700 0 .900.600 1.400.6 2.300 0 1-.900 1.600-2.400 1.600-4.600 0-8.400-3.200-8.400-7.500S12.800 13 17.400 13z" fill="#ffb8a8"/><circle cx="21.800" cy="20.500" r="1.500" fill="#414a5a"/><circle cx="16.400" cy="16.200" r="1.150" fill="#a56ee0"/><circle cx="12.900" cy="18.600" r="1.150" fill="#ff1f8e"/><circle cx="12.900" cy="22.300" r="1.150" fill="#00d26a"/><circle cx="16" cy="25" r="1.150" fill="#3f5fff"/></svg><svg style="left:1477px;top:863px" width="35" height="39" viewBox="0 0 35 39"><path d="M9.800 12.500l16 15.500H9.800z M12.800 19.600v5.400h5.600z" fill="#bebebe" fill-rule="evenodd"/><path d="M11.400 14l14 13.600" stroke="#a987e0" stroke-width="0.900" stroke-dasharray="0.900 1.300"/></svg><svg style="left:1519px;top:863px" width="35" height="39" viewBox="0 0 35 39"><path d="M19.8 13.7Q21.536 18.964 26.8 20.7Q21.536 22.436 19.8 27.7Q18.064 22.436 12.8 20.7Q18.064 18.964 19.8 13.7z" fill="#fcc93b" transform="scale(0.850 1) translate(3.500 0)"/><path d="M13.2 13.3Q13.82 15.18 15.7 15.8Q13.82 16.42 13.2 18.3Q12.579999999999998 16.42 10.7 15.8Q12.579999999999998 15.18 13.2 13.3z" fill="#fcc93b"/><path d="M12.2 21.1Q12.9192 23.2808 15.1 24Q12.9192 24.7192 12.2 26.9Q11.480799999999999 24.7192 9.299999999999999 24Q11.480799999999999 23.2808 12.2 21.1z" fill="#fcc93b"/></svg>
<div class="a" style="left:1903px;top:0px;width:17px;height:911px;background:#424242;"></div>
<div class="a" style="left:1905px;top:17px;width:13px;height:700px;background:#686868;"></div>
<svg style="left:1903px;top:0" width="17" height="911" viewBox="0 0 17 911"><path d="M5 11.2h7L8.5 6.8z" fill="#a3a3a3"/><path d="M5 900h7l-3.5 4.4z" fill="#ffffff"/></svg>
<span class="t " id="t0" style="left:16px;top:19.34px;font-size:13.02px;line-height:13.02px;color:#e5e7eb;font-weight:400;letter-spacing:0.119px;">Stable Diffusion checkpoint</span>
<span class="t " id="t1" style="left:33px;top:50.34px;font-size:13.02px;line-height:13.02px;color:#f3f4f6;font-weight:400;letter-spacing:-0.004px;">v1-5-pruned-emaonly.safetensors [6ce0161689]</span>
<span class="t " id="t2" style="left:439.5px;top:60.34px;font-size:13.02px;line-height:13.02px;color:#f3f4f6;font-weight:400;letter-spacing:0.229px;">Tiling</span>
<span class="t " id="t3" style="left:33px;top:103.91px;font-size:14.88px;line-height:14.88px;color:#f3f4f6;font-weight:400;letter-spacing:0.292px;">txt2img</span>
<span class="t " id="t4" style="left:117.7px;top:103.91px;font-size:14.88px;line-height:14.88px;color:#9ca3af;font-weight:400;letter-spacing:0.297px;">img2img</span>
<span class="t " id="t5" style="left:210.4px;top:103.91px;font-size:14.88px;line-height:14.88px;color:#9ca3af;font-weight:400;letter-spacing:-0.426px;">Extras</span>
<span class="t " id="t6" style="left:284.4px;top:103.91px;font-size:14.88px;line-height:14.88px;color:#9ca3af;font-weight:400;letter-spacing:-0.386px;">PNG Info</span>
<span class="t " id="t7" style="left:377px;top:103.91px;font-size:14.88px;line-height:14.88px;color:#9ca3af;font-weight:400;letter-spacing:0.019px;">Checkpoint Merger</span>
<span class="t " id="t8" style="left:537px;top:103.91px;font-size:14.88px;line-height:14.88px;color:#9ca3af;font-weight:400;letter-spacing:-0.069px;">Train</span>
<span class="t " id="t9" style="left:604px;top:103.91px;font-size:14.88px;line-height:14.88px;color:#9ca3af;font-weight:400;letter-spacing:0.156px;">Settings</span>
<span class="t " id="t10" style="left:693px;top:103.91px;font-size:14.88px;line-height:14.88px;color:#9ca3af;font-weight:400;letter-spacing:-0.177px;">Extensions</span>
<span class="t " id="t11" style="left:40px;top:150.34px;font-size:13.02px;line-height:13.02px;color:#f3f4f6;font-weight:400;letter-spacing:0.239px;">white tiles dirt texture</span>
<span class="t " id="t12" style="left:40px;top:250.34px;font-size:13.02px;line-height:13.02px;color:#f3f4f6;font-weight:400;letter-spacing:0.166px;">shadow, shiny, lowres, low quality, worst quality</span>
<span class="t " id="t13" style="left:1487.5px;top:128.34px;font-size:13.02px;line-height:13.02px;color:#f3f4f6;font-weight:400;letter-spacing:0.214px;">4/75</span>
<span class="t " id="t14" style="left:1481px;top:228.34px;font-size:13.02px;line-height:13.02px;color:#f3f4f6;font-weight:400;letter-spacing:0.024px;">12/75</span>
<span class="t ns" id="t15" style="left:1683px;top:165.91px;font-size:14.88px;line-height:14.88px;color:#ffffff;font-weight:700;letter-spacing:-0.312px;">Generate</span>
<span class="t " id="t16" style="left:46px;top:351.91px;font-size:14.88px;line-height:14.88px;color:#f3f4f6;font-weight:400;letter-spacing:0.039px;">Generation</span>
<span class="t " id="t17" style="left:154.5px;top:351.91px;font-size:14.88px;line-height:14.88px;color:#9ca3af;font-weight:400;letter-spacing:0.051px;">Textual Inversion</span>
<span class="t " id="t18" style="left:302px;top:351.91px;font-size:14.88px;line-height:14.88px;color:#9ca3af;font-weight:400;letter-spacing:0.215px;">Hypernetworks</span>
<span class="t " id="t19" style="left:438px;top:351.91px;font-size:14.88px;line-height:14.88px;color:#9ca3af;font-weight:400;letter-spacing:0.104px;">Checkpoints</span>
<span class="t " id="t20" style="left:555px;top:351.91px;font-size:14.88px;line-height:14.88px;color:#9ca3af;font-weight:400;letter-spacing:0.055px;">Lora</span>
<span class="t " id="t21" style="left:42px;top:392.34px;font-size:13.02px;line-height:13.02px;color:#e5e7eb;font-weight:400;letter-spacing:0.214px;">Sampling method</span>
<span class="t " id="t22" style="left:59px;top:423.34px;font-size:13.02px;line-height:13.02px;color:#f3f4f6;font-weight:400;letter-spacing:-0.666px;">DPM++ 2M</span>
<span class="t " id="t23" style="left:345px;top:392.34px;font-size:13.02px;line-height:13.02px;color:#e5e7eb;font-weight:400;letter-spacing:0.038px;">Schedule type</span>
<span class="t " id="t24" style="left:361.6px;top:423.34px;font-size:13.02px;line-height:13.02px;color:#f3f4f6;font-weight:400;letter-spacing:0.281px;">Automatic</span>
<span class="t " id="t25" style="left:648px;top:392.34px;font-size:13.02px;line-height:13.02px;color:#e5e7eb;font-weight:400;letter-spacing:0.000px;">Sampling steps</span>
<span class="t " id="t26" style="left:886.9px;top:395.34px;font-size:13.02px;line-height:13.02px;color:#f3f4f6;font-weight:400;letter-spacing:-0.542px;">20</span>
<span class="t " id="t27" style="left:75px;top:467.95px;font-size:15.81px;line-height:15.81px;color:#f3f4f6;font-weight:400;letter-spacing:-0.394px;">Hires. fix</span>
<span class="t " id="t28" style="left:529.5px;top:467.95px;font-size:15.81px;line-height:15.81px;color:#f3f4f6;font-weight:400;letter-spacing:-0.491px;">Refiner</span>
<span class="t " id="t29" style="left:42px;top:506.34px;font-size:13.02px;line-height:13.02px;color:#e5e7eb;font-weight:400;letter-spacing:0.144px;">Width</span>
<span class="t " id="t30" style="left:628.0px;top:509.34px;font-size:13.02px;line-height:13.02px;color:#f3f4f6;font-weight:400;letter-spacing:-0.573px;">512</span>
<span class="t " id="t31" style="left:42px;top:563.34px;font-size:13.02px;line-height:13.02px;color:#e5e7eb;font-weight:400;letter-spacing:0.229px;">Height</span>
<span class="t " id="t32" style="left:628.0px;top:566.34px;font-size:13.02px;line-height:13.02px;color:#f3f4f6;font-weight:400;letter-spacing:-0.573px;">512</span>
<span class="t " id="t33" style="left:754.7px;top:506.34px;font-size:13.02px;line-height:13.02px;color:#e5e7eb;font-weight:400;letter-spacing:0.141px;">Batch count</span>
<span class="t " id="t34" style="left:890.3000000000001px;top:509.34px;font-size:13.02px;line-height:13.02px;color:#f3f4f6;font-weight:400;letter-spacing:-0.650px;">1</span>
<span class="t " id="t35" style="left:754.7px;top:563.34px;font-size:13.02px;line-height:13.02px;color:#e5e7eb;font-weight:400;letter-spacing:-0.175px;">Batch size</span>
<span class="t " id="t36" style="left:890.3000000000001px;top:566.34px;font-size:13.02px;line-height:13.02px;color:#f3f4f6;font-weight:400;letter-spacing:-0.650px;">1</span>
<span class="t " id="t37" style="left:42px;top:615.34px;font-size:13.02px;line-height:13.02px;color:#e5e7eb;font-weight:400;letter-spacing:-0.684px;">CFG Scale</span>
<span class="t " id="t38" style="left:890.7px;top:618.34px;font-size:13.02px;line-height:13.02px;color:#f3f4f6;font-weight:400;letter-spacing:-0.650px;">7</span>
<span class="t " id="t39" style="left:42px;top:667.34px;font-size:13.02px;line-height:13.02px;color:#e5e7eb;font-weight:400;letter-spacing:-0.352px;">Seed</span>
<span class="t " id="t40" style="left:52.5px;top:697.34px;font-size:13.02px;line-height:13.02px;color:#f3f4f6;font-weight:400;letter-spacing:-0.039px;">-1</span>
<span class="t " id="t41" style="left:893.4px;top:699.34px;font-size:13.02px;line-height:13.02px;color:#f3f4f6;font-weight:400;letter-spacing:-0.358px;">Extra</span>
<span class="t " id="t42" style="left:42px;top:738.34px;font-size:13.02px;line-height:13.02px;color:#e5e7eb;font-weight:400;letter-spacing:0.236px;">Script</span>
<span class="t " id="t43" style="left:59px;top:769.34px;font-size:13.02px;line-height:13.02px;color:#f3f4f6;font-weight:400;letter-spacing:-0.031px;">None</span>
</div>
</body></html>
